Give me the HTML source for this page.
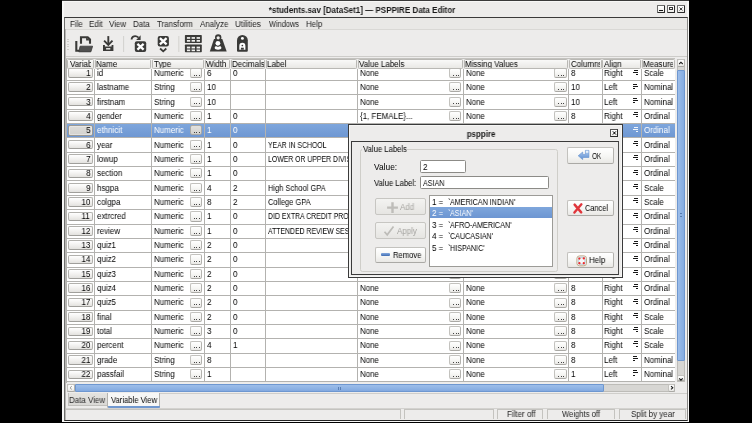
<!DOCTYPE html><html><head><meta charset="utf-8"><style>
html,body{margin:0;padding:0;}
body{width:752px;height:423px;background:#000;position:relative;overflow:hidden;font-family:"Liberation Sans", sans-serif;}
div{position:absolute;box-sizing:border-box;}
svg{position:absolute;overflow:visible;}
.t{white-space:pre;line-height:10px;will-change:transform;}
.rb{border:1px solid #b2b1ad;border-bottom-color:#a09f9b;border-radius:2px;background:linear-gradient(#ffffff,#f1f0ee 55%,#e3e2df);}
.hb{border:1px solid #b9b8b4;border-radius:1.5px;background:linear-gradient(#f9f9f8,#e9e8e5);}
.db{border:1px solid #c3c2be;border-right-color:#b3b2ae;border-bottom-color:#aaa9a5;border-radius:2px;background:linear-gradient(#ffffff,#f6f6f4 55%,#e9e8e5);}
.ds{border:1px solid #a9a8a4;border-radius:2px;background:linear-gradient(#e2e1de,#d2d1ce);}
.dt{border:1px solid #a8a7a3;border-radius:2px;background:linear-gradient(#ffffff,#f0efed 55%,#e0dfdc);}
</style></head><body>
<div style="left:62.20px;top:0.00px;width:627.00px;height:422.20px;background:#f7f7f6;border-top:1px solid #3a3a3a;"></div>
<div style="left:64.00px;top:2.00px;width:623.20px;height:418.20px;background:#edeceb;"></div>
<div class="t" style="left:162.00px;width:400px;text-align:center;top:4.60px;font-size:8.4px;font-weight:700;color:#1a1a1a;transform:scaleX(0.9595);transform-origin:50% 0;">*students.sav [DataSet1] — PSPPIRE Data Editor</div>
<div style="left:657.10px;top:5.00px;width:8.10px;height:8.00px;border:1px solid #6a6a6a;border-right-color:#2a2a2a;border-bottom-color:#2a2a2a;border-radius:1px;background:linear-gradient(#ffffff,#ecebe8);"></div>
<div style="left:667.00px;top:5.00px;width:8.10px;height:8.00px;border:1px solid #6a6a6a;border-right-color:#2a2a2a;border-bottom-color:#2a2a2a;border-radius:1px;background:linear-gradient(#ffffff,#ecebe8);"></div>
<div style="left:677.10px;top:5.00px;width:8.10px;height:8.00px;border:1px solid #6a6a6a;border-right-color:#2a2a2a;border-bottom-color:#2a2a2a;border-radius:1px;background:linear-gradient(#ffffff,#ecebe8);"></div>
<div style="left:659.30px;top:9.90px;width:3.90px;height:1.30px;background:#111;"></div>
<div style="left:669.00px;top:7.20px;width:4.40px;height:3.10px;border:1px solid #333;border-top-width:1.6px;"></div>
<svg style="left:677.1px;top:5px" width="8" height="8" viewBox="0 0 8 8"><path d="M2.2 2.2L5.9 5.8M5.9 2.2L2.2 5.8" stroke="#777" stroke-width="0.8"/><circle cx="4" cy="4" r="0.9" fill="#222"/></svg>
<div style="left:64.30px;top:16.80px;width:623.30px;height:404.00px;border:1px solid #3a3a3a;border-left-color:#6e6e6c;border-right-color:#8a8987;border-bottom-color:#262626;background:#edeceb;"></div>
<div style="left:65.30px;top:17.80px;width:0.90px;height:402.00px;background:#b8b7b4;"></div>
<div style="left:65.30px;top:17.80px;width:621.30px;height:10.80px;background:#e9e8e6;"></div>
<div class="t" style="left:69.90px;top:19.40px;font-size:8.4px;font-weight:400;color:#222;transform:scaleX(0.95);transform-origin:0 0;">File</div>
<div class="t" style="left:88.60px;top:19.40px;font-size:8.4px;font-weight:400;color:#222;transform:scaleX(0.95);transform-origin:0 0;">Edit</div>
<div class="t" style="left:109.30px;top:19.40px;font-size:8.4px;font-weight:400;color:#222;transform:scaleX(0.95);transform-origin:0 0;">View</div>
<div class="t" style="left:132.60px;top:19.40px;font-size:8.4px;font-weight:400;color:#222;transform:scaleX(0.95);transform-origin:0 0;">Data</div>
<div class="t" style="left:157.40px;top:19.40px;font-size:8.4px;font-weight:400;color:#222;transform:scaleX(0.95);transform-origin:0 0;">Transform</div>
<div class="t" style="left:200.00px;top:19.40px;font-size:8.4px;font-weight:400;color:#222;transform:scaleX(0.95);transform-origin:0 0;">Analyze</div>
<div class="t" style="left:235.00px;top:19.40px;font-size:8.4px;font-weight:400;color:#222;transform:scaleX(0.95);transform-origin:0 0;">Utilities</div>
<div class="t" style="left:268.60px;top:19.40px;font-size:8.4px;font-weight:400;color:#222;transform:scaleX(0.8835);transform-origin:0 0;">Windows</div>
<div class="t" style="left:306.00px;top:19.40px;font-size:8.4px;font-weight:400;color:#222;transform:scaleX(0.95);transform-origin:0 0;">Help</div>
<div style="left:66.20px;top:28.60px;width:620.40px;height:1.00px;background:#d9d8d5;"></div>
<div style="left:67.30px;top:39.00px;width:1.30px;height:0.90px;background:#cdccc8;"></div>
<div style="left:67.30px;top:41.40px;width:1.30px;height:0.90px;background:#cdccc8;"></div>
<div style="left:67.30px;top:43.80px;width:1.30px;height:0.90px;background:#cdccc8;"></div>
<div style="left:67.30px;top:46.20px;width:1.30px;height:0.90px;background:#cdccc8;"></div>
<div style="left:67.30px;top:48.60px;width:1.30px;height:0.90px;background:#cdccc8;"></div>
<svg style="left:0;top:0" width="752" height="60" viewBox="0 0 752 60">
<path d="M81 43.8 V37.2 H87.7 L90 39.5 V43.8" stroke="#3a3a38" stroke-width="2.1" fill="none" stroke-linejoin="miter"/>
<path d="M86.1 37.2 V40.6 H90.2 Z" fill="#3a3a38"/>
<path d="M76.3 41.1 V50.8 H90.6" stroke="#3a3a38" stroke-width="2.1" fill="none"/>
<path d="M80.1 46.2 H92.6 L90.9 51.8 H78.8 Z" fill="#505050" stroke="#3a3a38" stroke-width="0.8"/>
<path d="M108.3 36.1 V44.2" stroke="#3a3a38" stroke-width="1.9"/>
<path d="M104.1 40.6 L108.3 44.8 L112.5 40.6" stroke="#3a3a38" stroke-width="1.9" fill="none"/>
<path d="M103 45 H104.9 V46.6 H111.6 V45 H113.4 V51.1 H103 Z" fill="#3a3a38"/>
<rect x="106.1" y="48.1" width="4.2" height="1.4" fill="#f2f2f0"/>
<rect x="134.8" y="41.3" width="11.4" height="10.7" rx="2" fill="#3a3a38"/>
<path d="M137.4 43.9 L143.6 49.6 M143.6 43.9 L137.4 49.6" stroke="#fff" stroke-width="2.3"/>
<path d="M131.6 39.6 C131.6 36.2 135.5 35 138.6 37.6" stroke="#3a3a38" stroke-width="1.8" fill="none"/>
<path d="M140.6 35.2 V39.9 H136.2 Z" fill="#3a3a38"/>
<rect x="157.7" y="35.9" width="11.2" height="10.6" rx="2" fill="#3a3a38"/>
<path d="M159.9 38.2 L166.6 44.4 M166.6 38.2 L159.9 44.4" stroke="#fff" stroke-width="2.3"/>
<path d="M160.1 48.5 L163.2 51.3 L166.3 48.5" stroke="#3a3a38" stroke-width="1.8" fill="none"/>
<rect x="184.9" y="35.1" width="16.9" height="7.8" rx="0.7" fill="#3a3a38"/>
<rect x="184.9" y="44.6" width="16.9" height="7.7" rx="0.7" fill="#3a3a38"/>
<g fill="#f0f0ee">
<rect x="186.9" y="37.1" width="3.3" height="1.7"/><rect x="191.6" y="37.1" width="3.4" height="1.7"/><rect x="196.6" y="37.1" width="3.4" height="1.7"/>
<rect x="186.9" y="40.0" width="3.3" height="1.7"/><rect x="191.6" y="40.0" width="3.4" height="1.7"/><rect x="196.6" y="40.0" width="3.4" height="1.7"/>
<rect x="186.9" y="46.6" width="3.3" height="1.6"/><rect x="191.6" y="46.6" width="3.4" height="1.6"/><rect x="196.6" y="46.6" width="3.4" height="1.6"/>
<rect x="186.9" y="49.6" width="3.3" height="1.6"/><rect x="191.6" y="49.6" width="3.4" height="1.6"/><rect x="196.6" y="49.6" width="3.4" height="1.6"/>
</g>
<g fill="#9a9a98"><rect x="186.9" y="48.2" width="3.3" height="1.4"/><rect x="191.6" y="48.2" width="3.4" height="1.4"/><rect x="196.6" y="48.2" width="3.4" height="1.4"/></g>
<path d="M214.0 39.0 H222.3 L226.7 51.6 H209.8 Z" fill="#3a3a38"/>
<circle cx="218.2" cy="37.4" r="3.2" fill="#3a3a38"/>
<circle cx="218.2" cy="37.8" r="1.6" fill="#efeeec"/>
<circle cx="217.9" cy="43.3" r="2.4" fill="#fff"/>
<path d="M214.7 48.0 C214.7 46.0 216.3 45.7 218.0 46.9 C219.7 45.7 221.4 46.0 221.4 48.0 C221.4 50.2 214.7 50.2 214.7 48.0 Z" fill="#fff"/>
<path d="M237 40.3 a5.4 5.4 0 0 1 10.8 0 V50.8 a1 1 0 0 1-1 1 h-8.8 a1 1 0 0 1-1-1 Z" fill="#3a3a38"/>
<circle cx="242.4" cy="38.4" r="1.45" fill="#fff"/>
<path d="M239.3 49.7 V45.9 a3.05 3.05 0 0 1 6.1 0 V49.7 Z" fill="#fff"/>
<circle cx="242.35" cy="45.5" r="0.85" fill="#3a3a38"/>
<rect x="240.9" y="47.7" width="2.9" height="2.0" fill="#3a3a38"/>
<rect x="123.2" y="36.0" width="0.9" height="16" fill="#cfcecb"/>
<rect x="178.4" y="36.0" width="0.9" height="16" fill="#cfcecb"/>
</svg>
<div style="left:66.20px;top:56.20px;width:620.40px;height:0.90px;background:#cdccc9;"></div>
<div style="left:66.60px;top:58.30px;width:608.70px;height:324.06px;background:#fff;"></div>
<div style="left:66.60px;top:123.96px;width:608.70px;height:13.95px;background:linear-gradient(#7ea6dc,#6d96d2);"></div>
<div style="left:66.60px;top:80.00px;width:608.70px;height:1.00px;background:#b3b2af;"></div>
<div style="left:66.60px;top:94.36px;width:608.70px;height:1.00px;background:#b3b2af;"></div>
<div style="left:66.60px;top:108.71px;width:608.70px;height:1.00px;background:#b3b2af;"></div>
<div style="left:66.60px;top:123.06px;width:608.70px;height:1.00px;background:#b3b2af;"></div>
<div style="left:66.60px;top:137.42px;width:608.70px;height:1.00px;background:#b3b2af;"></div>
<div style="left:66.60px;top:151.77px;width:608.70px;height:1.00px;background:#b3b2af;"></div>
<div style="left:66.60px;top:166.13px;width:608.70px;height:1.00px;background:#b3b2af;"></div>
<div style="left:66.60px;top:180.48px;width:608.70px;height:1.00px;background:#b3b2af;"></div>
<div style="left:66.60px;top:194.84px;width:608.70px;height:1.00px;background:#b3b2af;"></div>
<div style="left:66.60px;top:209.19px;width:608.70px;height:1.00px;background:#b3b2af;"></div>
<div style="left:66.60px;top:223.55px;width:608.70px;height:1.00px;background:#b3b2af;"></div>
<div style="left:66.60px;top:237.90px;width:608.70px;height:1.00px;background:#b3b2af;"></div>
<div style="left:66.60px;top:252.26px;width:608.70px;height:1.00px;background:#b3b2af;"></div>
<div style="left:66.60px;top:266.62px;width:608.70px;height:1.00px;background:#b3b2af;"></div>
<div style="left:66.60px;top:280.97px;width:608.70px;height:1.00px;background:#b3b2af;"></div>
<div style="left:66.60px;top:295.32px;width:608.70px;height:1.00px;background:#b3b2af;"></div>
<div style="left:66.60px;top:309.68px;width:608.70px;height:1.00px;background:#b3b2af;"></div>
<div style="left:66.60px;top:324.03px;width:608.70px;height:1.00px;background:#b3b2af;"></div>
<div style="left:66.60px;top:338.39px;width:608.70px;height:1.00px;background:#b3b2af;"></div>
<div style="left:66.60px;top:352.75px;width:608.70px;height:1.00px;background:#b3b2af;"></div>
<div style="left:66.60px;top:367.10px;width:608.70px;height:1.00px;background:#b3b2af;"></div>
<div style="left:66.60px;top:381.45px;width:608.70px;height:1.00px;background:#b3b2af;"></div>
<div style="left:94.00px;top:58.30px;width:1.00px;height:323.95px;background:#b3b2af;"></div>
<div style="left:151.10px;top:58.30px;width:1.00px;height:323.95px;background:#b3b2af;"></div>
<div style="left:203.90px;top:58.30px;width:1.00px;height:323.95px;background:#b3b2af;"></div>
<div style="left:229.90px;top:58.30px;width:1.00px;height:323.95px;background:#b3b2af;"></div>
<div style="left:265.00px;top:58.30px;width:1.00px;height:323.95px;background:#b3b2af;"></div>
<div style="left:356.90px;top:58.30px;width:1.00px;height:323.95px;background:#b3b2af;"></div>
<div style="left:462.90px;top:58.30px;width:1.00px;height:323.95px;background:#b3b2af;"></div>
<div style="left:568.20px;top:58.30px;width:1.00px;height:323.95px;background:#b3b2af;"></div>
<div style="left:601.50px;top:58.30px;width:1.00px;height:323.95px;background:#b3b2af;"></div>
<div style="left:641.00px;top:58.30px;width:1.00px;height:323.95px;background:#b3b2af;"></div>
<div style="left:66.60px;top:58.30px;width:608.70px;height:10.40px;background:#edeceb;"></div>
<div class="hb" style="left:67.30px;top:58.80px;width:26.80px;height:10.20px;"></div>
<div style="left:68.30px;top:58.30px;width:23.20px;height:10px;overflow:hidden;"><div class="t" style="left:1.6px;top:1.2px;font-size:8.40px;color:#000000;transform:scaleX(0.95);transform-origin:0 0;">Variable</div></div>
<div class="hb" style="left:94.90px;top:58.80px;width:56.30px;height:10.20px;"></div>
<div style="left:95.90px;top:58.30px;width:53.90px;height:10px;overflow:hidden;"><div class="t" style="left:0.6px;top:1.2px;font-size:8.40px;color:#000000;transform:scaleX(0.95);transform-origin:0 0;">Name</div></div>
<div class="hb" style="left:152.00px;top:58.80px;width:52.00px;height:10.20px;"></div>
<div style="left:153.00px;top:58.30px;width:49.60px;height:10px;overflow:hidden;"><div class="t" style="left:0.6px;top:1.2px;font-size:8.40px;color:#000000;transform:scaleX(0.95);transform-origin:0 0;">Type</div></div>
<div class="hb" style="left:204.80px;top:58.80px;width:25.20px;height:10.20px;"></div>
<div style="left:205.80px;top:58.30px;width:22.80px;height:10px;overflow:hidden;"><div class="t" style="left:0.6px;top:1.2px;font-size:8.40px;color:#000000;transform:scaleX(0.95);transform-origin:0 0;">Width</div></div>
<div class="hb" style="left:230.80px;top:58.80px;width:34.30px;height:10.20px;"></div>
<div style="left:231.80px;top:58.30px;width:31.90px;height:10px;overflow:hidden;"><div class="t" style="left:0.6px;top:1.2px;font-size:8.40px;color:#000000;transform:scaleX(0.95);transform-origin:0 0;">Decimals</div></div>
<div class="hb" style="left:265.90px;top:58.80px;width:91.10px;height:10.20px;"></div>
<div style="left:266.90px;top:58.30px;width:88.70px;height:10px;overflow:hidden;"><div class="t" style="left:0.6px;top:1.2px;font-size:8.40px;color:#000000;transform:scaleX(0.95);transform-origin:0 0;">Label</div></div>
<div class="hb" style="left:357.80px;top:58.80px;width:105.20px;height:10.20px;"></div>
<div style="left:358.80px;top:58.30px;width:102.80px;height:10px;overflow:hidden;"><div class="t" style="left:0.6px;top:1.2px;font-size:8.40px;color:#000000;transform:scaleX(0.95);transform-origin:0 0;">Value Labels</div></div>
<div class="hb" style="left:463.80px;top:58.80px;width:104.50px;height:10.20px;"></div>
<div style="left:464.80px;top:58.30px;width:102.10px;height:10px;overflow:hidden;"><div class="t" style="left:0.6px;top:1.2px;font-size:8.40px;color:#000000;transform:scaleX(0.95);transform-origin:0 0;">Missing Values</div></div>
<div class="hb" style="left:569.10px;top:58.80px;width:32.50px;height:10.20px;"></div>
<div style="left:570.10px;top:58.30px;width:30.10px;height:10px;overflow:hidden;"><div class="t" style="left:0.6px;top:1.2px;font-size:8.40px;color:#000000;transform:scaleX(0.95);transform-origin:0 0;">Columns</div></div>
<div class="hb" style="left:602.40px;top:58.80px;width:38.70px;height:10.20px;"></div>
<div style="left:603.40px;top:58.30px;width:36.30px;height:10px;overflow:hidden;"><div class="t" style="left:0.6px;top:1.2px;font-size:8.40px;color:#000000;transform:scaleX(0.95);transform-origin:0 0;">Align</div></div>
<div class="hb" style="left:641.90px;top:58.80px;width:33.00px;height:10.20px;"></div>
<div style="left:642.90px;top:58.30px;width:30.60px;height:10px;overflow:hidden;"><div class="t" style="left:0.6px;top:1.2px;font-size:8.40px;color:#000000;transform:scaleX(0.95);transform-origin:0 0;">Measure</div></div>
<div style="left:66.6px;top:68.7px;width:608.70px;height:314.06px;overflow:hidden;">
<div class="rb" style="left:1.90px;top:-0.56px;width:24.50px;height:9.56px;"></div>
<div class="t" style="right:585.10px;top:-0.23px;font-size:8.40px;color:#000000;transform:scaleX(0.95);transform-origin:100% 0;">1</div>
<div class="t" style="left:30.00px;top:-0.23px;font-size:8.40px;color:#000000;transform:scaleX(0.95);transform-origin:0 0;">id</div>
<div class="t" style="left:87.40px;top:-0.23px;font-size:8.40px;color:#000000;transform:scaleX(0.95);transform-origin:0 0;">Numeric</div>
<div class="db" style="left:123.60px;top:-0.86px;width:12.00px;height:10.16px;"></div>
<div style="left:127.60px;top:6.00px;width:0.95px;height:0.95px;background:#333;border-radius:0.3px;"></div>
<div style="left:129.85px;top:6.00px;width:0.95px;height:0.95px;background:#333;border-radius:0.3px;"></div>
<div style="left:132.10px;top:6.00px;width:0.95px;height:0.95px;background:#333;border-radius:0.3px;"></div>
<div class="t" style="left:140.00px;top:-0.23px;font-size:8.40px;color:#000000;transform:scaleX(0.95);transform-origin:0 0;">6</div>
<div class="t" style="left:166.20px;top:-0.23px;font-size:8.40px;color:#000000;transform:scaleX(0.95);transform-origin:0 0;">0</div>
<div class="t" style="left:293.20px;top:-0.23px;font-size:8.40px;color:#000000;transform:scaleX(0.95);transform-origin:0 0;">None</div>
<div class="db" style="left:382.80px;top:-0.86px;width:11.80px;height:10.16px;"></div>
<div style="left:386.70px;top:6.00px;width:0.95px;height:0.95px;background:#333;border-radius:0.3px;"></div>
<div style="left:388.95px;top:6.00px;width:0.95px;height:0.95px;background:#333;border-radius:0.3px;"></div>
<div style="left:391.20px;top:6.00px;width:0.95px;height:0.95px;background:#333;border-radius:0.3px;"></div>
<div class="t" style="left:399.20px;top:-0.23px;font-size:8.40px;color:#000000;transform:scaleX(0.95);transform-origin:0 0;">None</div>
<div class="db" style="left:487.80px;top:-0.86px;width:12.20px;height:10.16px;"></div>
<div style="left:491.80px;top:6.00px;width:0.95px;height:0.95px;background:#333;border-radius:0.3px;"></div>
<div style="left:494.05px;top:6.00px;width:0.95px;height:0.95px;background:#333;border-radius:0.3px;"></div>
<div style="left:496.30px;top:6.00px;width:0.95px;height:0.95px;background:#333;border-radius:0.3px;"></div>
<div class="t" style="left:504.80px;top:-0.23px;font-size:8.40px;color:#000000;transform:scaleX(0.95);transform-origin:0 0;">8</div>
<div class="t" style="left:537.60px;top:-0.23px;font-size:8.40px;color:#000000;transform:scaleX(0.95);transform-origin:0 0;">Right</div>
<div style="left:567.60px;top:1.07px;width:3.80px;height:1.00px;background:#000000;opacity:0.9;"></div>
<div style="left:566.10px;top:3.07px;width:5.70px;height:1.00px;background:#000000;opacity:0.9;"></div>
<div style="left:569.30px;top:5.17px;width:2.50px;height:1.00px;background:#000000;opacity:0.9;"></div>
<div class="t" style="left:577.30px;top:-0.23px;font-size:8.40px;color:#000000;transform:scaleX(0.95);transform-origin:0 0;">Scale</div>
<div class="rb" style="left:1.90px;top:13.80px;width:24.50px;height:9.56px;"></div>
<div class="t" style="right:585.10px;top:13.60px;font-size:8.40px;color:#000000;transform:scaleX(0.95);transform-origin:100% 0;">2</div>
<div class="t" style="left:30.00px;top:13.60px;font-size:8.40px;color:#000000;transform:scaleX(0.95);transform-origin:0 0;">lastname</div>
<div class="t" style="left:87.40px;top:13.60px;font-size:8.40px;color:#000000;transform:scaleX(0.95);transform-origin:0 0;">String</div>
<div class="db" style="left:123.60px;top:13.50px;width:12.00px;height:10.16px;"></div>
<div style="left:127.60px;top:20.36px;width:0.95px;height:0.95px;background:#333;border-radius:0.3px;"></div>
<div style="left:129.85px;top:20.36px;width:0.95px;height:0.95px;background:#333;border-radius:0.3px;"></div>
<div style="left:132.10px;top:20.36px;width:0.95px;height:0.95px;background:#333;border-radius:0.3px;"></div>
<div class="t" style="left:140.00px;top:13.60px;font-size:8.40px;color:#000000;transform:scaleX(0.95);transform-origin:0 0;">10</div>
<div class="t" style="left:166.20px;top:13.60px;font-size:8.40px;color:#000000;transform:scaleX(0.95);transform-origin:0 0;"></div>
<div class="t" style="left:293.20px;top:13.60px;font-size:8.40px;color:#000000;transform:scaleX(0.95);transform-origin:0 0;">None</div>
<div class="db" style="left:382.80px;top:13.50px;width:11.80px;height:10.16px;"></div>
<div style="left:386.70px;top:20.36px;width:0.95px;height:0.95px;background:#333;border-radius:0.3px;"></div>
<div style="left:388.95px;top:20.36px;width:0.95px;height:0.95px;background:#333;border-radius:0.3px;"></div>
<div style="left:391.20px;top:20.36px;width:0.95px;height:0.95px;background:#333;border-radius:0.3px;"></div>
<div class="t" style="left:399.20px;top:13.60px;font-size:8.40px;color:#000000;transform:scaleX(0.95);transform-origin:0 0;">None</div>
<div class="db" style="left:487.80px;top:13.50px;width:12.20px;height:10.16px;"></div>
<div style="left:491.80px;top:20.36px;width:0.95px;height:0.95px;background:#333;border-radius:0.3px;"></div>
<div style="left:494.05px;top:20.36px;width:0.95px;height:0.95px;background:#333;border-radius:0.3px;"></div>
<div style="left:496.30px;top:20.36px;width:0.95px;height:0.95px;background:#333;border-radius:0.3px;"></div>
<div class="t" style="left:504.80px;top:13.60px;font-size:8.40px;color:#000000;transform:scaleX(0.95);transform-origin:0 0;">10</div>
<div class="t" style="left:537.60px;top:13.60px;font-size:8.40px;color:#000000;transform:scaleX(0.95);transform-origin:0 0;">Left</div>
<div style="left:566.50px;top:15.10px;width:3.90px;height:1.00px;background:#000000;opacity:0.9;"></div>
<div style="left:566.50px;top:17.20px;width:5.30px;height:1.00px;background:#000000;opacity:0.9;"></div>
<div style="left:566.50px;top:19.30px;width:2.10px;height:1.00px;background:#000000;opacity:0.9;"></div>
<div class="t" style="left:577.30px;top:13.60px;font-size:8.40px;color:#000000;transform:scaleX(0.95);transform-origin:0 0;">Nominal</div>
<div class="rb" style="left:1.90px;top:28.15px;width:24.50px;height:9.56px;"></div>
<div class="t" style="right:585.10px;top:27.93px;font-size:8.40px;color:#000000;transform:scaleX(0.95);transform-origin:100% 0;">3</div>
<div class="t" style="left:30.00px;top:27.93px;font-size:8.40px;color:#000000;transform:scaleX(0.95);transform-origin:0 0;">firstnam</div>
<div class="t" style="left:87.40px;top:27.93px;font-size:8.40px;color:#000000;transform:scaleX(0.95);transform-origin:0 0;">String</div>
<div class="db" style="left:123.60px;top:27.85px;width:12.00px;height:10.16px;"></div>
<div style="left:127.60px;top:34.71px;width:0.95px;height:0.95px;background:#333;border-radius:0.3px;"></div>
<div style="left:129.85px;top:34.71px;width:0.95px;height:0.95px;background:#333;border-radius:0.3px;"></div>
<div style="left:132.10px;top:34.71px;width:0.95px;height:0.95px;background:#333;border-radius:0.3px;"></div>
<div class="t" style="left:140.00px;top:27.93px;font-size:8.40px;color:#000000;transform:scaleX(0.95);transform-origin:0 0;">10</div>
<div class="t" style="left:166.20px;top:27.93px;font-size:8.40px;color:#000000;transform:scaleX(0.95);transform-origin:0 0;"></div>
<div class="t" style="left:293.20px;top:27.93px;font-size:8.40px;color:#000000;transform:scaleX(0.95);transform-origin:0 0;">None</div>
<div class="db" style="left:382.80px;top:27.85px;width:11.80px;height:10.16px;"></div>
<div style="left:386.70px;top:34.71px;width:0.95px;height:0.95px;background:#333;border-radius:0.3px;"></div>
<div style="left:388.95px;top:34.71px;width:0.95px;height:0.95px;background:#333;border-radius:0.3px;"></div>
<div style="left:391.20px;top:34.71px;width:0.95px;height:0.95px;background:#333;border-radius:0.3px;"></div>
<div class="t" style="left:399.20px;top:27.93px;font-size:8.40px;color:#000000;transform:scaleX(0.95);transform-origin:0 0;">None</div>
<div class="db" style="left:487.80px;top:27.85px;width:12.20px;height:10.16px;"></div>
<div style="left:491.80px;top:34.71px;width:0.95px;height:0.95px;background:#333;border-radius:0.3px;"></div>
<div style="left:494.05px;top:34.71px;width:0.95px;height:0.95px;background:#333;border-radius:0.3px;"></div>
<div style="left:496.30px;top:34.71px;width:0.95px;height:0.95px;background:#333;border-radius:0.3px;"></div>
<div class="t" style="left:504.80px;top:27.93px;font-size:8.40px;color:#000000;transform:scaleX(0.95);transform-origin:0 0;">10</div>
<div class="t" style="left:537.60px;top:27.93px;font-size:8.40px;color:#000000;transform:scaleX(0.95);transform-origin:0 0;">Left</div>
<div style="left:566.50px;top:29.43px;width:3.90px;height:1.00px;background:#000000;opacity:0.9;"></div>
<div style="left:566.50px;top:31.53px;width:5.30px;height:1.00px;background:#000000;opacity:0.9;"></div>
<div style="left:566.50px;top:33.63px;width:2.10px;height:1.00px;background:#000000;opacity:0.9;"></div>
<div class="t" style="left:577.30px;top:27.93px;font-size:8.40px;color:#000000;transform:scaleX(0.95);transform-origin:0 0;">Nominal</div>
<div class="rb" style="left:1.90px;top:42.51px;width:24.50px;height:9.56px;"></div>
<div class="t" style="right:585.10px;top:42.26px;font-size:8.40px;color:#000000;transform:scaleX(0.95);transform-origin:100% 0;">4</div>
<div class="t" style="left:30.00px;top:42.26px;font-size:8.40px;color:#000000;transform:scaleX(0.95);transform-origin:0 0;">gender</div>
<div class="t" style="left:87.40px;top:42.26px;font-size:8.40px;color:#000000;transform:scaleX(0.95);transform-origin:0 0;">Numeric</div>
<div class="db" style="left:123.60px;top:42.21px;width:12.00px;height:10.16px;"></div>
<div style="left:127.60px;top:49.06px;width:0.95px;height:0.95px;background:#333;border-radius:0.3px;"></div>
<div style="left:129.85px;top:49.06px;width:0.95px;height:0.95px;background:#333;border-radius:0.3px;"></div>
<div style="left:132.10px;top:49.06px;width:0.95px;height:0.95px;background:#333;border-radius:0.3px;"></div>
<div class="t" style="left:140.00px;top:42.26px;font-size:8.40px;color:#000000;transform:scaleX(0.95);transform-origin:0 0;">1</div>
<div class="t" style="left:166.20px;top:42.26px;font-size:8.40px;color:#000000;transform:scaleX(0.95);transform-origin:0 0;">0</div>
<div class="t" style="left:293.20px;top:42.26px;font-size:8.40px;color:#000000;transform:scaleX(0.95);transform-origin:0 0;">{1, FEMALE}...</div>
<div class="db" style="left:382.80px;top:42.21px;width:11.80px;height:10.16px;"></div>
<div style="left:386.70px;top:49.06px;width:0.95px;height:0.95px;background:#333;border-radius:0.3px;"></div>
<div style="left:388.95px;top:49.06px;width:0.95px;height:0.95px;background:#333;border-radius:0.3px;"></div>
<div style="left:391.20px;top:49.06px;width:0.95px;height:0.95px;background:#333;border-radius:0.3px;"></div>
<div class="t" style="left:399.20px;top:42.26px;font-size:8.40px;color:#000000;transform:scaleX(0.95);transform-origin:0 0;">None</div>
<div class="db" style="left:487.80px;top:42.21px;width:12.20px;height:10.16px;"></div>
<div style="left:491.80px;top:49.06px;width:0.95px;height:0.95px;background:#333;border-radius:0.3px;"></div>
<div style="left:494.05px;top:49.06px;width:0.95px;height:0.95px;background:#333;border-radius:0.3px;"></div>
<div style="left:496.30px;top:49.06px;width:0.95px;height:0.95px;background:#333;border-radius:0.3px;"></div>
<div class="t" style="left:504.80px;top:42.26px;font-size:8.40px;color:#000000;transform:scaleX(0.95);transform-origin:0 0;">8</div>
<div class="t" style="left:537.60px;top:42.26px;font-size:8.40px;color:#000000;transform:scaleX(0.95);transform-origin:0 0;">Right</div>
<div style="left:567.60px;top:43.56px;width:3.80px;height:1.00px;background:#000000;opacity:0.9;"></div>
<div style="left:566.10px;top:45.56px;width:5.70px;height:1.00px;background:#000000;opacity:0.9;"></div>
<div style="left:569.30px;top:47.66px;width:2.50px;height:1.00px;background:#000000;opacity:0.9;"></div>
<div class="t" style="left:577.30px;top:42.26px;font-size:8.40px;color:#000000;transform:scaleX(0.95);transform-origin:0 0;">Ordinal</div>
<div style="left:1.40px;top:56.26px;width:25.00px;height:10.95px;border:1px solid #9a9995;border-radius:2px;background:linear-gradient(#dedddA,#d3d2cf);box-shadow:inset 0 0 0 0.6px #f3f2ef;"></div>
<div class="t" style="right:585.10px;top:56.58px;font-size:8.40px;color:#000000;transform:scaleX(0.95);transform-origin:100% 0;">5</div>
<div class="t" style="left:30.00px;top:56.58px;font-size:8.40px;color:#ffffff;transform:scaleX(0.95);transform-origin:0 0;">ethnicit</div>
<div class="t" style="left:87.40px;top:56.58px;font-size:8.40px;color:#ffffff;transform:scaleX(0.95);transform-origin:0 0;">Numeric</div>
<div class="ds" style="left:123.60px;top:56.56px;width:12.00px;height:10.15px;"></div>
<div style="left:127.60px;top:63.42px;width:0.95px;height:0.95px;background:#333;border-radius:0.3px;"></div>
<div style="left:129.85px;top:63.42px;width:0.95px;height:0.95px;background:#333;border-radius:0.3px;"></div>
<div style="left:132.10px;top:63.42px;width:0.95px;height:0.95px;background:#333;border-radius:0.3px;"></div>
<div class="t" style="left:140.00px;top:56.58px;font-size:8.40px;color:#ffffff;transform:scaleX(0.95);transform-origin:0 0;">1</div>
<div class="t" style="left:166.20px;top:56.58px;font-size:8.40px;color:#ffffff;transform:scaleX(0.95);transform-origin:0 0;">0</div>
<div class="t" style="left:293.20px;top:56.58px;font-size:8.40px;color:#ffffff;transform:scaleX(0.95);transform-origin:0 0;">None</div>
<div class="db" style="left:382.80px;top:56.56px;width:11.80px;height:10.15px;"></div>
<div style="left:386.70px;top:63.42px;width:0.95px;height:0.95px;background:#333;border-radius:0.3px;"></div>
<div style="left:388.95px;top:63.42px;width:0.95px;height:0.95px;background:#333;border-radius:0.3px;"></div>
<div style="left:391.20px;top:63.42px;width:0.95px;height:0.95px;background:#333;border-radius:0.3px;"></div>
<div class="t" style="left:399.20px;top:56.58px;font-size:8.40px;color:#ffffff;transform:scaleX(0.95);transform-origin:0 0;">None</div>
<div class="db" style="left:487.80px;top:56.56px;width:12.20px;height:10.15px;"></div>
<div style="left:491.80px;top:63.42px;width:0.95px;height:0.95px;background:#333;border-radius:0.3px;"></div>
<div style="left:494.05px;top:63.42px;width:0.95px;height:0.95px;background:#333;border-radius:0.3px;"></div>
<div style="left:496.30px;top:63.42px;width:0.95px;height:0.95px;background:#333;border-radius:0.3px;"></div>
<div class="t" style="left:504.80px;top:56.58px;font-size:8.40px;color:#ffffff;transform:scaleX(0.95);transform-origin:0 0;">8</div>
<div class="t" style="left:537.60px;top:56.58px;font-size:8.40px;color:#ffffff;transform:scaleX(0.95);transform-origin:0 0;">Right</div>
<div style="left:567.60px;top:57.88px;width:3.80px;height:1.00px;background:#ffffff;opacity:0.9;"></div>
<div style="left:566.10px;top:59.88px;width:5.70px;height:1.00px;background:#ffffff;opacity:0.9;"></div>
<div style="left:569.30px;top:61.98px;width:2.50px;height:1.00px;background:#ffffff;opacity:0.9;"></div>
<div class="t" style="left:577.30px;top:56.58px;font-size:8.40px;color:#ffffff;transform:scaleX(0.95);transform-origin:0 0;">Ordinal</div>
<div class="rb" style="left:1.90px;top:71.22px;width:24.50px;height:9.56px;"></div>
<div class="t" style="right:585.10px;top:70.91px;font-size:8.40px;color:#000000;transform:scaleX(0.95);transform-origin:100% 0;">6</div>
<div class="t" style="left:30.00px;top:70.91px;font-size:8.40px;color:#000000;transform:scaleX(0.95);transform-origin:0 0;">year</div>
<div class="t" style="left:87.40px;top:70.91px;font-size:8.40px;color:#000000;transform:scaleX(0.95);transform-origin:0 0;">Numeric</div>
<div class="db" style="left:123.60px;top:70.92px;width:12.00px;height:10.15px;"></div>
<div style="left:127.60px;top:77.77px;width:0.95px;height:0.95px;background:#333;border-radius:0.3px;"></div>
<div style="left:129.85px;top:77.77px;width:0.95px;height:0.95px;background:#333;border-radius:0.3px;"></div>
<div style="left:132.10px;top:77.77px;width:0.95px;height:0.95px;background:#333;border-radius:0.3px;"></div>
<div class="t" style="left:140.00px;top:70.91px;font-size:8.40px;color:#000000;transform:scaleX(0.95);transform-origin:0 0;">1</div>
<div class="t" style="left:166.20px;top:70.91px;font-size:8.40px;color:#000000;transform:scaleX(0.95);transform-origin:0 0;">0</div>
<div style="left:201.00px;top:70.91px;width:89.40px;height:10px;overflow:hidden;"><div class="t" style="left:0;top:0;font-size:8.40px;color:#000000;transform:scaleX(0.8217);transform-origin:0 0;">YEAR IN SCHOOL</div></div>
<div class="t" style="left:293.20px;top:70.91px;font-size:8.40px;color:#000000;transform:scaleX(0.95);transform-origin:0 0;">None</div>
<div class="db" style="left:382.80px;top:70.92px;width:11.80px;height:10.15px;"></div>
<div style="left:386.70px;top:77.77px;width:0.95px;height:0.95px;background:#333;border-radius:0.3px;"></div>
<div style="left:388.95px;top:77.77px;width:0.95px;height:0.95px;background:#333;border-radius:0.3px;"></div>
<div style="left:391.20px;top:77.77px;width:0.95px;height:0.95px;background:#333;border-radius:0.3px;"></div>
<div class="t" style="left:399.20px;top:70.91px;font-size:8.40px;color:#000000;transform:scaleX(0.95);transform-origin:0 0;">None</div>
<div class="db" style="left:487.80px;top:70.92px;width:12.20px;height:10.15px;"></div>
<div style="left:491.80px;top:77.77px;width:0.95px;height:0.95px;background:#333;border-radius:0.3px;"></div>
<div style="left:494.05px;top:77.77px;width:0.95px;height:0.95px;background:#333;border-radius:0.3px;"></div>
<div style="left:496.30px;top:77.77px;width:0.95px;height:0.95px;background:#333;border-radius:0.3px;"></div>
<div class="t" style="left:504.80px;top:70.91px;font-size:8.40px;color:#000000;transform:scaleX(0.95);transform-origin:0 0;">8</div>
<div class="t" style="left:537.60px;top:70.91px;font-size:8.40px;color:#000000;transform:scaleX(0.95);transform-origin:0 0;">Right</div>
<div style="left:567.60px;top:72.21px;width:3.80px;height:1.00px;background:#000000;opacity:0.9;"></div>
<div style="left:566.10px;top:74.21px;width:5.70px;height:1.00px;background:#000000;opacity:0.9;"></div>
<div style="left:569.30px;top:76.31px;width:2.50px;height:1.00px;background:#000000;opacity:0.9;"></div>
<div class="t" style="left:577.30px;top:70.91px;font-size:8.40px;color:#000000;transform:scaleX(0.95);transform-origin:0 0;">Ordinal</div>
<div class="rb" style="left:1.90px;top:85.58px;width:24.50px;height:9.56px;"></div>
<div class="t" style="right:585.10px;top:85.24px;font-size:8.40px;color:#000000;transform:scaleX(0.95);transform-origin:100% 0;">7</div>
<div class="t" style="left:30.00px;top:85.24px;font-size:8.40px;color:#000000;transform:scaleX(0.95);transform-origin:0 0;">lowup</div>
<div class="t" style="left:87.40px;top:85.24px;font-size:8.40px;color:#000000;transform:scaleX(0.95);transform-origin:0 0;">Numeric</div>
<div class="db" style="left:123.60px;top:85.28px;width:12.00px;height:10.15px;"></div>
<div style="left:127.60px;top:92.13px;width:0.95px;height:0.95px;background:#333;border-radius:0.3px;"></div>
<div style="left:129.85px;top:92.13px;width:0.95px;height:0.95px;background:#333;border-radius:0.3px;"></div>
<div style="left:132.10px;top:92.13px;width:0.95px;height:0.95px;background:#333;border-radius:0.3px;"></div>
<div class="t" style="left:140.00px;top:85.24px;font-size:8.40px;color:#000000;transform:scaleX(0.95);transform-origin:0 0;">1</div>
<div class="t" style="left:166.20px;top:85.24px;font-size:8.40px;color:#000000;transform:scaleX(0.95);transform-origin:0 0;">0</div>
<div style="left:201.00px;top:85.24px;width:89.40px;height:10px;overflow:hidden;"><div class="t" style="left:0;top:0;font-size:8.40px;color:#000000;transform:scaleX(0.8217);transform-origin:0 0;">LOWER OR UPPER DIVISION</div></div>
<div class="t" style="left:293.20px;top:85.24px;font-size:8.40px;color:#000000;transform:scaleX(0.95);transform-origin:0 0;">None</div>
<div class="db" style="left:382.80px;top:85.28px;width:11.80px;height:10.15px;"></div>
<div style="left:386.70px;top:92.13px;width:0.95px;height:0.95px;background:#333;border-radius:0.3px;"></div>
<div style="left:388.95px;top:92.13px;width:0.95px;height:0.95px;background:#333;border-radius:0.3px;"></div>
<div style="left:391.20px;top:92.13px;width:0.95px;height:0.95px;background:#333;border-radius:0.3px;"></div>
<div class="t" style="left:399.20px;top:85.24px;font-size:8.40px;color:#000000;transform:scaleX(0.95);transform-origin:0 0;">None</div>
<div class="db" style="left:487.80px;top:85.28px;width:12.20px;height:10.15px;"></div>
<div style="left:491.80px;top:92.13px;width:0.95px;height:0.95px;background:#333;border-radius:0.3px;"></div>
<div style="left:494.05px;top:92.13px;width:0.95px;height:0.95px;background:#333;border-radius:0.3px;"></div>
<div style="left:496.30px;top:92.13px;width:0.95px;height:0.95px;background:#333;border-radius:0.3px;"></div>
<div class="t" style="left:504.80px;top:85.24px;font-size:8.40px;color:#000000;transform:scaleX(0.95);transform-origin:0 0;">8</div>
<div class="t" style="left:537.60px;top:85.24px;font-size:8.40px;color:#000000;transform:scaleX(0.95);transform-origin:0 0;">Right</div>
<div style="left:567.60px;top:86.54px;width:3.80px;height:1.00px;background:#000000;opacity:0.9;"></div>
<div style="left:566.10px;top:88.54px;width:5.70px;height:1.00px;background:#000000;opacity:0.9;"></div>
<div style="left:569.30px;top:90.64px;width:2.50px;height:1.00px;background:#000000;opacity:0.9;"></div>
<div class="t" style="left:577.30px;top:85.24px;font-size:8.40px;color:#000000;transform:scaleX(0.95);transform-origin:0 0;">Ordinal</div>
<div class="rb" style="left:1.90px;top:99.93px;width:24.50px;height:9.56px;"></div>
<div class="t" style="right:585.10px;top:99.57px;font-size:8.40px;color:#000000;transform:scaleX(0.95);transform-origin:100% 0;">8</div>
<div class="t" style="left:30.00px;top:99.57px;font-size:8.40px;color:#000000;transform:scaleX(0.95);transform-origin:0 0;">section</div>
<div class="t" style="left:87.40px;top:99.57px;font-size:8.40px;color:#000000;transform:scaleX(0.95);transform-origin:0 0;">Numeric</div>
<div class="db" style="left:123.60px;top:99.63px;width:12.00px;height:10.15px;"></div>
<div style="left:127.60px;top:106.48px;width:0.95px;height:0.95px;background:#333;border-radius:0.3px;"></div>
<div style="left:129.85px;top:106.48px;width:0.95px;height:0.95px;background:#333;border-radius:0.3px;"></div>
<div style="left:132.10px;top:106.48px;width:0.95px;height:0.95px;background:#333;border-radius:0.3px;"></div>
<div class="t" style="left:140.00px;top:99.57px;font-size:8.40px;color:#000000;transform:scaleX(0.95);transform-origin:0 0;">1</div>
<div class="t" style="left:166.20px;top:99.57px;font-size:8.40px;color:#000000;transform:scaleX(0.95);transform-origin:0 0;">0</div>
<div class="t" style="left:293.20px;top:99.57px;font-size:8.40px;color:#000000;transform:scaleX(0.95);transform-origin:0 0;">None</div>
<div class="db" style="left:382.80px;top:99.63px;width:11.80px;height:10.15px;"></div>
<div style="left:386.70px;top:106.48px;width:0.95px;height:0.95px;background:#333;border-radius:0.3px;"></div>
<div style="left:388.95px;top:106.48px;width:0.95px;height:0.95px;background:#333;border-radius:0.3px;"></div>
<div style="left:391.20px;top:106.48px;width:0.95px;height:0.95px;background:#333;border-radius:0.3px;"></div>
<div class="t" style="left:399.20px;top:99.57px;font-size:8.40px;color:#000000;transform:scaleX(0.95);transform-origin:0 0;">None</div>
<div class="db" style="left:487.80px;top:99.63px;width:12.20px;height:10.15px;"></div>
<div style="left:491.80px;top:106.48px;width:0.95px;height:0.95px;background:#333;border-radius:0.3px;"></div>
<div style="left:494.05px;top:106.48px;width:0.95px;height:0.95px;background:#333;border-radius:0.3px;"></div>
<div style="left:496.30px;top:106.48px;width:0.95px;height:0.95px;background:#333;border-radius:0.3px;"></div>
<div class="t" style="left:504.80px;top:99.57px;font-size:8.40px;color:#000000;transform:scaleX(0.95);transform-origin:0 0;">8</div>
<div class="t" style="left:537.60px;top:99.57px;font-size:8.40px;color:#000000;transform:scaleX(0.95);transform-origin:0 0;">Right</div>
<div style="left:567.60px;top:100.87px;width:3.80px;height:1.00px;background:#000000;opacity:0.9;"></div>
<div style="left:566.10px;top:102.87px;width:5.70px;height:1.00px;background:#000000;opacity:0.9;"></div>
<div style="left:569.30px;top:104.97px;width:2.50px;height:1.00px;background:#000000;opacity:0.9;"></div>
<div class="t" style="left:577.30px;top:99.57px;font-size:8.40px;color:#000000;transform:scaleX(0.95);transform-origin:0 0;">Ordinal</div>
<div class="rb" style="left:1.90px;top:114.28px;width:24.50px;height:9.56px;"></div>
<div class="t" style="right:585.10px;top:113.90px;font-size:8.40px;color:#000000;transform:scaleX(0.95);transform-origin:100% 0;">9</div>
<div class="t" style="left:30.00px;top:113.90px;font-size:8.40px;color:#000000;transform:scaleX(0.95);transform-origin:0 0;">hsgpa</div>
<div class="t" style="left:87.40px;top:113.90px;font-size:8.40px;color:#000000;transform:scaleX(0.95);transform-origin:0 0;">Numeric</div>
<div class="db" style="left:123.60px;top:113.98px;width:12.00px;height:10.15px;"></div>
<div style="left:127.60px;top:120.84px;width:0.95px;height:0.95px;background:#333;border-radius:0.3px;"></div>
<div style="left:129.85px;top:120.84px;width:0.95px;height:0.95px;background:#333;border-radius:0.3px;"></div>
<div style="left:132.10px;top:120.84px;width:0.95px;height:0.95px;background:#333;border-radius:0.3px;"></div>
<div class="t" style="left:140.00px;top:113.90px;font-size:8.40px;color:#000000;transform:scaleX(0.95);transform-origin:0 0;">4</div>
<div class="t" style="left:166.20px;top:113.90px;font-size:8.40px;color:#000000;transform:scaleX(0.95);transform-origin:0 0;">2</div>
<div style="left:201.00px;top:113.90px;width:89.40px;height:10px;overflow:hidden;"><div class="t" style="left:0;top:0;font-size:8.40px;color:#000000;transform:scaleX(0.893);transform-origin:0 0;">High School GPA</div></div>
<div class="t" style="left:293.20px;top:113.90px;font-size:8.40px;color:#000000;transform:scaleX(0.95);transform-origin:0 0;">None</div>
<div class="db" style="left:382.80px;top:113.98px;width:11.80px;height:10.15px;"></div>
<div style="left:386.70px;top:120.84px;width:0.95px;height:0.95px;background:#333;border-radius:0.3px;"></div>
<div style="left:388.95px;top:120.84px;width:0.95px;height:0.95px;background:#333;border-radius:0.3px;"></div>
<div style="left:391.20px;top:120.84px;width:0.95px;height:0.95px;background:#333;border-radius:0.3px;"></div>
<div class="t" style="left:399.20px;top:113.90px;font-size:8.40px;color:#000000;transform:scaleX(0.95);transform-origin:0 0;">None</div>
<div class="db" style="left:487.80px;top:113.98px;width:12.20px;height:10.15px;"></div>
<div style="left:491.80px;top:120.84px;width:0.95px;height:0.95px;background:#333;border-radius:0.3px;"></div>
<div style="left:494.05px;top:120.84px;width:0.95px;height:0.95px;background:#333;border-radius:0.3px;"></div>
<div style="left:496.30px;top:120.84px;width:0.95px;height:0.95px;background:#333;border-radius:0.3px;"></div>
<div class="t" style="left:504.80px;top:113.90px;font-size:8.40px;color:#000000;transform:scaleX(0.95);transform-origin:0 0;">8</div>
<div class="t" style="left:537.60px;top:113.90px;font-size:8.40px;color:#000000;transform:scaleX(0.95);transform-origin:0 0;">Right</div>
<div style="left:567.60px;top:115.20px;width:3.80px;height:1.00px;background:#000000;opacity:0.9;"></div>
<div style="left:566.10px;top:117.20px;width:5.70px;height:1.00px;background:#000000;opacity:0.9;"></div>
<div style="left:569.30px;top:119.30px;width:2.50px;height:1.00px;background:#000000;opacity:0.9;"></div>
<div class="t" style="left:577.30px;top:113.90px;font-size:8.40px;color:#000000;transform:scaleX(0.95);transform-origin:0 0;">Scale</div>
<div class="rb" style="left:1.90px;top:128.64px;width:24.50px;height:9.56px;"></div>
<div class="t" style="right:585.10px;top:128.22px;font-size:8.40px;color:#000000;transform:scaleX(0.95);transform-origin:100% 0;">10</div>
<div class="t" style="left:30.00px;top:128.22px;font-size:8.40px;color:#000000;transform:scaleX(0.95);transform-origin:0 0;">colgpa</div>
<div class="t" style="left:87.40px;top:128.22px;font-size:8.40px;color:#000000;transform:scaleX(0.95);transform-origin:0 0;">Numeric</div>
<div class="db" style="left:123.60px;top:128.34px;width:12.00px;height:10.15px;"></div>
<div style="left:127.60px;top:135.19px;width:0.95px;height:0.95px;background:#333;border-radius:0.3px;"></div>
<div style="left:129.85px;top:135.19px;width:0.95px;height:0.95px;background:#333;border-radius:0.3px;"></div>
<div style="left:132.10px;top:135.19px;width:0.95px;height:0.95px;background:#333;border-radius:0.3px;"></div>
<div class="t" style="left:140.00px;top:128.22px;font-size:8.40px;color:#000000;transform:scaleX(0.95);transform-origin:0 0;">8</div>
<div class="t" style="left:166.20px;top:128.22px;font-size:8.40px;color:#000000;transform:scaleX(0.95);transform-origin:0 0;">2</div>
<div style="left:201.00px;top:128.22px;width:89.40px;height:10px;overflow:hidden;"><div class="t" style="left:0;top:0;font-size:8.40px;color:#000000;transform:scaleX(0.893);transform-origin:0 0;">College GPA</div></div>
<div class="t" style="left:293.20px;top:128.22px;font-size:8.40px;color:#000000;transform:scaleX(0.95);transform-origin:0 0;">None</div>
<div class="db" style="left:382.80px;top:128.34px;width:11.80px;height:10.15px;"></div>
<div style="left:386.70px;top:135.19px;width:0.95px;height:0.95px;background:#333;border-radius:0.3px;"></div>
<div style="left:388.95px;top:135.19px;width:0.95px;height:0.95px;background:#333;border-radius:0.3px;"></div>
<div style="left:391.20px;top:135.19px;width:0.95px;height:0.95px;background:#333;border-radius:0.3px;"></div>
<div class="t" style="left:399.20px;top:128.22px;font-size:8.40px;color:#000000;transform:scaleX(0.95);transform-origin:0 0;">None</div>
<div class="db" style="left:487.80px;top:128.34px;width:12.20px;height:10.15px;"></div>
<div style="left:491.80px;top:135.19px;width:0.95px;height:0.95px;background:#333;border-radius:0.3px;"></div>
<div style="left:494.05px;top:135.19px;width:0.95px;height:0.95px;background:#333;border-radius:0.3px;"></div>
<div style="left:496.30px;top:135.19px;width:0.95px;height:0.95px;background:#333;border-radius:0.3px;"></div>
<div class="t" style="left:504.80px;top:128.22px;font-size:8.40px;color:#000000;transform:scaleX(0.95);transform-origin:0 0;">8</div>
<div class="t" style="left:537.60px;top:128.22px;font-size:8.40px;color:#000000;transform:scaleX(0.95);transform-origin:0 0;">Right</div>
<div style="left:567.60px;top:129.52px;width:3.80px;height:1.00px;background:#000000;opacity:0.9;"></div>
<div style="left:566.10px;top:131.52px;width:5.70px;height:1.00px;background:#000000;opacity:0.9;"></div>
<div style="left:569.30px;top:133.62px;width:2.50px;height:1.00px;background:#000000;opacity:0.9;"></div>
<div class="t" style="left:577.30px;top:128.22px;font-size:8.40px;color:#000000;transform:scaleX(0.95);transform-origin:0 0;">Scale</div>
<div class="rb" style="left:1.90px;top:143.00px;width:24.50px;height:9.56px;"></div>
<div class="t" style="right:585.10px;top:142.55px;font-size:8.40px;color:#000000;transform:scaleX(0.95);transform-origin:100% 0;">11</div>
<div class="t" style="left:30.00px;top:142.55px;font-size:8.40px;color:#000000;transform:scaleX(0.95);transform-origin:0 0;">extrcred</div>
<div class="t" style="left:87.40px;top:142.55px;font-size:8.40px;color:#000000;transform:scaleX(0.95);transform-origin:0 0;">Numeric</div>
<div class="db" style="left:123.60px;top:142.70px;width:12.00px;height:10.15px;"></div>
<div style="left:127.60px;top:149.55px;width:0.95px;height:0.95px;background:#333;border-radius:0.3px;"></div>
<div style="left:129.85px;top:149.55px;width:0.95px;height:0.95px;background:#333;border-radius:0.3px;"></div>
<div style="left:132.10px;top:149.55px;width:0.95px;height:0.95px;background:#333;border-radius:0.3px;"></div>
<div class="t" style="left:140.00px;top:142.55px;font-size:8.40px;color:#000000;transform:scaleX(0.95);transform-origin:0 0;">1</div>
<div class="t" style="left:166.20px;top:142.55px;font-size:8.40px;color:#000000;transform:scaleX(0.95);transform-origin:0 0;">0</div>
<div style="left:201.00px;top:142.55px;width:89.40px;height:10px;overflow:hidden;"><div class="t" style="left:0;top:0;font-size:8.40px;color:#000000;transform:scaleX(0.8217);transform-origin:0 0;">DID EXTRA CREDIT PROJECT</div></div>
<div class="t" style="left:293.20px;top:142.55px;font-size:8.40px;color:#000000;transform:scaleX(0.95);transform-origin:0 0;">None</div>
<div class="db" style="left:382.80px;top:142.70px;width:11.80px;height:10.15px;"></div>
<div style="left:386.70px;top:149.55px;width:0.95px;height:0.95px;background:#333;border-radius:0.3px;"></div>
<div style="left:388.95px;top:149.55px;width:0.95px;height:0.95px;background:#333;border-radius:0.3px;"></div>
<div style="left:391.20px;top:149.55px;width:0.95px;height:0.95px;background:#333;border-radius:0.3px;"></div>
<div class="t" style="left:399.20px;top:142.55px;font-size:8.40px;color:#000000;transform:scaleX(0.95);transform-origin:0 0;">None</div>
<div class="db" style="left:487.80px;top:142.70px;width:12.20px;height:10.15px;"></div>
<div style="left:491.80px;top:149.55px;width:0.95px;height:0.95px;background:#333;border-radius:0.3px;"></div>
<div style="left:494.05px;top:149.55px;width:0.95px;height:0.95px;background:#333;border-radius:0.3px;"></div>
<div style="left:496.30px;top:149.55px;width:0.95px;height:0.95px;background:#333;border-radius:0.3px;"></div>
<div class="t" style="left:504.80px;top:142.55px;font-size:8.40px;color:#000000;transform:scaleX(0.95);transform-origin:0 0;">8</div>
<div class="t" style="left:537.60px;top:142.55px;font-size:8.40px;color:#000000;transform:scaleX(0.95);transform-origin:0 0;">Right</div>
<div style="left:567.60px;top:143.85px;width:3.80px;height:1.00px;background:#000000;opacity:0.9;"></div>
<div style="left:566.10px;top:145.85px;width:5.70px;height:1.00px;background:#000000;opacity:0.9;"></div>
<div style="left:569.30px;top:147.95px;width:2.50px;height:1.00px;background:#000000;opacity:0.9;"></div>
<div class="t" style="left:577.30px;top:142.55px;font-size:8.40px;color:#000000;transform:scaleX(0.95);transform-origin:0 0;">Ordinal</div>
<div class="rb" style="left:1.90px;top:157.35px;width:24.50px;height:9.56px;"></div>
<div class="t" style="right:585.10px;top:156.88px;font-size:8.40px;color:#000000;transform:scaleX(0.95);transform-origin:100% 0;">12</div>
<div class="t" style="left:30.00px;top:156.88px;font-size:8.40px;color:#000000;transform:scaleX(0.95);transform-origin:0 0;">review</div>
<div class="t" style="left:87.40px;top:156.88px;font-size:8.40px;color:#000000;transform:scaleX(0.95);transform-origin:0 0;">Numeric</div>
<div class="db" style="left:123.60px;top:157.05px;width:12.00px;height:10.15px;"></div>
<div style="left:127.60px;top:163.90px;width:0.95px;height:0.95px;background:#333;border-radius:0.3px;"></div>
<div style="left:129.85px;top:163.90px;width:0.95px;height:0.95px;background:#333;border-radius:0.3px;"></div>
<div style="left:132.10px;top:163.90px;width:0.95px;height:0.95px;background:#333;border-radius:0.3px;"></div>
<div class="t" style="left:140.00px;top:156.88px;font-size:8.40px;color:#000000;transform:scaleX(0.95);transform-origin:0 0;">1</div>
<div class="t" style="left:166.20px;top:156.88px;font-size:8.40px;color:#000000;transform:scaleX(0.95);transform-origin:0 0;">0</div>
<div style="left:201.00px;top:156.88px;width:89.40px;height:10px;overflow:hidden;"><div class="t" style="left:0;top:0;font-size:8.40px;color:#000000;transform:scaleX(0.8217);transform-origin:0 0;">ATTENDED REVIEW SESSION</div></div>
<div class="t" style="left:293.20px;top:156.88px;font-size:8.40px;color:#000000;transform:scaleX(0.95);transform-origin:0 0;">None</div>
<div class="db" style="left:382.80px;top:157.05px;width:11.80px;height:10.15px;"></div>
<div style="left:386.70px;top:163.90px;width:0.95px;height:0.95px;background:#333;border-radius:0.3px;"></div>
<div style="left:388.95px;top:163.90px;width:0.95px;height:0.95px;background:#333;border-radius:0.3px;"></div>
<div style="left:391.20px;top:163.90px;width:0.95px;height:0.95px;background:#333;border-radius:0.3px;"></div>
<div class="t" style="left:399.20px;top:156.88px;font-size:8.40px;color:#000000;transform:scaleX(0.95);transform-origin:0 0;">None</div>
<div class="db" style="left:487.80px;top:157.05px;width:12.20px;height:10.15px;"></div>
<div style="left:491.80px;top:163.90px;width:0.95px;height:0.95px;background:#333;border-radius:0.3px;"></div>
<div style="left:494.05px;top:163.90px;width:0.95px;height:0.95px;background:#333;border-radius:0.3px;"></div>
<div style="left:496.30px;top:163.90px;width:0.95px;height:0.95px;background:#333;border-radius:0.3px;"></div>
<div class="t" style="left:504.80px;top:156.88px;font-size:8.40px;color:#000000;transform:scaleX(0.95);transform-origin:0 0;">8</div>
<div class="t" style="left:537.60px;top:156.88px;font-size:8.40px;color:#000000;transform:scaleX(0.95);transform-origin:0 0;">Right</div>
<div style="left:567.60px;top:158.18px;width:3.80px;height:1.00px;background:#000000;opacity:0.9;"></div>
<div style="left:566.10px;top:160.18px;width:5.70px;height:1.00px;background:#000000;opacity:0.9;"></div>
<div style="left:569.30px;top:162.28px;width:2.50px;height:1.00px;background:#000000;opacity:0.9;"></div>
<div class="t" style="left:577.30px;top:156.88px;font-size:8.40px;color:#000000;transform:scaleX(0.95);transform-origin:0 0;">Ordinal</div>
<div class="rb" style="left:1.90px;top:171.70px;width:24.50px;height:9.56px;"></div>
<div class="t" style="right:585.10px;top:171.21px;font-size:8.40px;color:#000000;transform:scaleX(0.95);transform-origin:100% 0;">13</div>
<div class="t" style="left:30.00px;top:171.21px;font-size:8.40px;color:#000000;transform:scaleX(0.95);transform-origin:0 0;">quiz1</div>
<div class="t" style="left:87.40px;top:171.21px;font-size:8.40px;color:#000000;transform:scaleX(0.95);transform-origin:0 0;">Numeric</div>
<div class="db" style="left:123.60px;top:171.41px;width:12.00px;height:10.15px;"></div>
<div style="left:127.60px;top:178.26px;width:0.95px;height:0.95px;background:#333;border-radius:0.3px;"></div>
<div style="left:129.85px;top:178.26px;width:0.95px;height:0.95px;background:#333;border-radius:0.3px;"></div>
<div style="left:132.10px;top:178.26px;width:0.95px;height:0.95px;background:#333;border-radius:0.3px;"></div>
<div class="t" style="left:140.00px;top:171.21px;font-size:8.40px;color:#000000;transform:scaleX(0.95);transform-origin:0 0;">2</div>
<div class="t" style="left:166.20px;top:171.21px;font-size:8.40px;color:#000000;transform:scaleX(0.95);transform-origin:0 0;">0</div>
<div class="t" style="left:293.20px;top:171.21px;font-size:8.40px;color:#000000;transform:scaleX(0.95);transform-origin:0 0;">None</div>
<div class="db" style="left:382.80px;top:171.41px;width:11.80px;height:10.15px;"></div>
<div style="left:386.70px;top:178.26px;width:0.95px;height:0.95px;background:#333;border-radius:0.3px;"></div>
<div style="left:388.95px;top:178.26px;width:0.95px;height:0.95px;background:#333;border-radius:0.3px;"></div>
<div style="left:391.20px;top:178.26px;width:0.95px;height:0.95px;background:#333;border-radius:0.3px;"></div>
<div class="t" style="left:399.20px;top:171.21px;font-size:8.40px;color:#000000;transform:scaleX(0.95);transform-origin:0 0;">None</div>
<div class="db" style="left:487.80px;top:171.41px;width:12.20px;height:10.15px;"></div>
<div style="left:491.80px;top:178.26px;width:0.95px;height:0.95px;background:#333;border-radius:0.3px;"></div>
<div style="left:494.05px;top:178.26px;width:0.95px;height:0.95px;background:#333;border-radius:0.3px;"></div>
<div style="left:496.30px;top:178.26px;width:0.95px;height:0.95px;background:#333;border-radius:0.3px;"></div>
<div class="t" style="left:504.80px;top:171.21px;font-size:8.40px;color:#000000;transform:scaleX(0.95);transform-origin:0 0;">8</div>
<div class="t" style="left:537.60px;top:171.21px;font-size:8.40px;color:#000000;transform:scaleX(0.95);transform-origin:0 0;">Right</div>
<div style="left:567.60px;top:172.51px;width:3.80px;height:1.00px;background:#000000;opacity:0.9;"></div>
<div style="left:566.10px;top:174.51px;width:5.70px;height:1.00px;background:#000000;opacity:0.9;"></div>
<div style="left:569.30px;top:176.61px;width:2.50px;height:1.00px;background:#000000;opacity:0.9;"></div>
<div class="t" style="left:577.30px;top:171.21px;font-size:8.40px;color:#000000;transform:scaleX(0.95);transform-origin:0 0;">Ordinal</div>
<div class="rb" style="left:1.90px;top:186.06px;width:24.50px;height:9.56px;"></div>
<div class="t" style="right:585.10px;top:185.54px;font-size:8.40px;color:#000000;transform:scaleX(0.95);transform-origin:100% 0;">14</div>
<div class="t" style="left:30.00px;top:185.54px;font-size:8.40px;color:#000000;transform:scaleX(0.95);transform-origin:0 0;">quiz2</div>
<div class="t" style="left:87.40px;top:185.54px;font-size:8.40px;color:#000000;transform:scaleX(0.95);transform-origin:0 0;">Numeric</div>
<div class="db" style="left:123.60px;top:185.76px;width:12.00px;height:10.15px;"></div>
<div style="left:127.60px;top:192.62px;width:0.95px;height:0.95px;background:#333;border-radius:0.3px;"></div>
<div style="left:129.85px;top:192.62px;width:0.95px;height:0.95px;background:#333;border-radius:0.3px;"></div>
<div style="left:132.10px;top:192.62px;width:0.95px;height:0.95px;background:#333;border-radius:0.3px;"></div>
<div class="t" style="left:140.00px;top:185.54px;font-size:8.40px;color:#000000;transform:scaleX(0.95);transform-origin:0 0;">2</div>
<div class="t" style="left:166.20px;top:185.54px;font-size:8.40px;color:#000000;transform:scaleX(0.95);transform-origin:0 0;">0</div>
<div class="t" style="left:293.20px;top:185.54px;font-size:8.40px;color:#000000;transform:scaleX(0.95);transform-origin:0 0;">None</div>
<div class="db" style="left:382.80px;top:185.76px;width:11.80px;height:10.15px;"></div>
<div style="left:386.70px;top:192.62px;width:0.95px;height:0.95px;background:#333;border-radius:0.3px;"></div>
<div style="left:388.95px;top:192.62px;width:0.95px;height:0.95px;background:#333;border-radius:0.3px;"></div>
<div style="left:391.20px;top:192.62px;width:0.95px;height:0.95px;background:#333;border-radius:0.3px;"></div>
<div class="t" style="left:399.20px;top:185.54px;font-size:8.40px;color:#000000;transform:scaleX(0.95);transform-origin:0 0;">None</div>
<div class="db" style="left:487.80px;top:185.76px;width:12.20px;height:10.15px;"></div>
<div style="left:491.80px;top:192.62px;width:0.95px;height:0.95px;background:#333;border-radius:0.3px;"></div>
<div style="left:494.05px;top:192.62px;width:0.95px;height:0.95px;background:#333;border-radius:0.3px;"></div>
<div style="left:496.30px;top:192.62px;width:0.95px;height:0.95px;background:#333;border-radius:0.3px;"></div>
<div class="t" style="left:504.80px;top:185.54px;font-size:8.40px;color:#000000;transform:scaleX(0.95);transform-origin:0 0;">8</div>
<div class="t" style="left:537.60px;top:185.54px;font-size:8.40px;color:#000000;transform:scaleX(0.95);transform-origin:0 0;">Right</div>
<div style="left:567.60px;top:186.84px;width:3.80px;height:1.00px;background:#000000;opacity:0.9;"></div>
<div style="left:566.10px;top:188.84px;width:5.70px;height:1.00px;background:#000000;opacity:0.9;"></div>
<div style="left:569.30px;top:190.94px;width:2.50px;height:1.00px;background:#000000;opacity:0.9;"></div>
<div class="t" style="left:577.30px;top:185.54px;font-size:8.40px;color:#000000;transform:scaleX(0.95);transform-origin:0 0;">Ordinal</div>
<div class="rb" style="left:1.90px;top:200.41px;width:24.50px;height:9.56px;"></div>
<div class="t" style="right:585.10px;top:199.86px;font-size:8.40px;color:#000000;transform:scaleX(0.95);transform-origin:100% 0;">15</div>
<div class="t" style="left:30.00px;top:199.86px;font-size:8.40px;color:#000000;transform:scaleX(0.95);transform-origin:0 0;">quiz3</div>
<div class="t" style="left:87.40px;top:199.86px;font-size:8.40px;color:#000000;transform:scaleX(0.95);transform-origin:0 0;">Numeric</div>
<div class="db" style="left:123.60px;top:200.11px;width:12.00px;height:10.16px;"></div>
<div style="left:127.60px;top:206.97px;width:0.95px;height:0.95px;background:#333;border-radius:0.3px;"></div>
<div style="left:129.85px;top:206.97px;width:0.95px;height:0.95px;background:#333;border-radius:0.3px;"></div>
<div style="left:132.10px;top:206.97px;width:0.95px;height:0.95px;background:#333;border-radius:0.3px;"></div>
<div class="t" style="left:140.00px;top:199.86px;font-size:8.40px;color:#000000;transform:scaleX(0.95);transform-origin:0 0;">2</div>
<div class="t" style="left:166.20px;top:199.86px;font-size:8.40px;color:#000000;transform:scaleX(0.95);transform-origin:0 0;">0</div>
<div class="t" style="left:293.20px;top:199.86px;font-size:8.40px;color:#000000;transform:scaleX(0.95);transform-origin:0 0;">None</div>
<div class="db" style="left:382.80px;top:200.11px;width:11.80px;height:10.16px;"></div>
<div style="left:386.70px;top:206.97px;width:0.95px;height:0.95px;background:#333;border-radius:0.3px;"></div>
<div style="left:388.95px;top:206.97px;width:0.95px;height:0.95px;background:#333;border-radius:0.3px;"></div>
<div style="left:391.20px;top:206.97px;width:0.95px;height:0.95px;background:#333;border-radius:0.3px;"></div>
<div class="t" style="left:399.20px;top:199.86px;font-size:8.40px;color:#000000;transform:scaleX(0.95);transform-origin:0 0;">None</div>
<div class="db" style="left:487.80px;top:200.11px;width:12.20px;height:10.16px;"></div>
<div style="left:491.80px;top:206.97px;width:0.95px;height:0.95px;background:#333;border-radius:0.3px;"></div>
<div style="left:494.05px;top:206.97px;width:0.95px;height:0.95px;background:#333;border-radius:0.3px;"></div>
<div style="left:496.30px;top:206.97px;width:0.95px;height:0.95px;background:#333;border-radius:0.3px;"></div>
<div class="t" style="left:504.80px;top:199.86px;font-size:8.40px;color:#000000;transform:scaleX(0.95);transform-origin:0 0;">8</div>
<div class="t" style="left:537.60px;top:199.86px;font-size:8.40px;color:#000000;transform:scaleX(0.95);transform-origin:0 0;">Right</div>
<div style="left:567.60px;top:201.16px;width:3.80px;height:1.00px;background:#000000;opacity:0.9;"></div>
<div style="left:566.10px;top:203.16px;width:5.70px;height:1.00px;background:#000000;opacity:0.9;"></div>
<div style="left:569.30px;top:205.26px;width:2.50px;height:1.00px;background:#000000;opacity:0.9;"></div>
<div class="t" style="left:577.30px;top:199.86px;font-size:8.40px;color:#000000;transform:scaleX(0.95);transform-origin:0 0;">Ordinal</div>
<div class="rb" style="left:1.90px;top:214.77px;width:24.50px;height:9.56px;"></div>
<div class="t" style="right:585.10px;top:214.19px;font-size:8.40px;color:#000000;transform:scaleX(0.95);transform-origin:100% 0;">16</div>
<div class="t" style="left:30.00px;top:214.19px;font-size:8.40px;color:#000000;transform:scaleX(0.95);transform-origin:0 0;">quiz4</div>
<div class="t" style="left:87.40px;top:214.19px;font-size:8.40px;color:#000000;transform:scaleX(0.95);transform-origin:0 0;">Numeric</div>
<div class="db" style="left:123.60px;top:214.47px;width:12.00px;height:10.16px;"></div>
<div style="left:127.60px;top:221.32px;width:0.95px;height:0.95px;background:#333;border-radius:0.3px;"></div>
<div style="left:129.85px;top:221.32px;width:0.95px;height:0.95px;background:#333;border-radius:0.3px;"></div>
<div style="left:132.10px;top:221.32px;width:0.95px;height:0.95px;background:#333;border-radius:0.3px;"></div>
<div class="t" style="left:140.00px;top:214.19px;font-size:8.40px;color:#000000;transform:scaleX(0.95);transform-origin:0 0;">2</div>
<div class="t" style="left:166.20px;top:214.19px;font-size:8.40px;color:#000000;transform:scaleX(0.95);transform-origin:0 0;">0</div>
<div class="t" style="left:293.20px;top:214.19px;font-size:8.40px;color:#000000;transform:scaleX(0.95);transform-origin:0 0;">None</div>
<div class="db" style="left:382.80px;top:214.47px;width:11.80px;height:10.16px;"></div>
<div style="left:386.70px;top:221.32px;width:0.95px;height:0.95px;background:#333;border-radius:0.3px;"></div>
<div style="left:388.95px;top:221.32px;width:0.95px;height:0.95px;background:#333;border-radius:0.3px;"></div>
<div style="left:391.20px;top:221.32px;width:0.95px;height:0.95px;background:#333;border-radius:0.3px;"></div>
<div class="t" style="left:399.20px;top:214.19px;font-size:8.40px;color:#000000;transform:scaleX(0.95);transform-origin:0 0;">None</div>
<div class="db" style="left:487.80px;top:214.47px;width:12.20px;height:10.16px;"></div>
<div style="left:491.80px;top:221.32px;width:0.95px;height:0.95px;background:#333;border-radius:0.3px;"></div>
<div style="left:494.05px;top:221.32px;width:0.95px;height:0.95px;background:#333;border-radius:0.3px;"></div>
<div style="left:496.30px;top:221.32px;width:0.95px;height:0.95px;background:#333;border-radius:0.3px;"></div>
<div class="t" style="left:504.80px;top:214.19px;font-size:8.40px;color:#000000;transform:scaleX(0.95);transform-origin:0 0;">8</div>
<div class="t" style="left:537.60px;top:214.19px;font-size:8.40px;color:#000000;transform:scaleX(0.95);transform-origin:0 0;">Right</div>
<div style="left:567.60px;top:215.49px;width:3.80px;height:1.00px;background:#000000;opacity:0.9;"></div>
<div style="left:566.10px;top:217.49px;width:5.70px;height:1.00px;background:#000000;opacity:0.9;"></div>
<div style="left:569.30px;top:219.59px;width:2.50px;height:1.00px;background:#000000;opacity:0.9;"></div>
<div class="t" style="left:577.30px;top:214.19px;font-size:8.40px;color:#000000;transform:scaleX(0.95);transform-origin:0 0;">Ordinal</div>
<div class="rb" style="left:1.90px;top:229.12px;width:24.50px;height:9.56px;"></div>
<div class="t" style="right:585.10px;top:228.52px;font-size:8.40px;color:#000000;transform:scaleX(0.95);transform-origin:100% 0;">17</div>
<div class="t" style="left:30.00px;top:228.52px;font-size:8.40px;color:#000000;transform:scaleX(0.95);transform-origin:0 0;">quiz5</div>
<div class="t" style="left:87.40px;top:228.52px;font-size:8.40px;color:#000000;transform:scaleX(0.95);transform-origin:0 0;">Numeric</div>
<div class="db" style="left:123.60px;top:228.82px;width:12.00px;height:10.16px;"></div>
<div style="left:127.60px;top:235.68px;width:0.95px;height:0.95px;background:#333;border-radius:0.3px;"></div>
<div style="left:129.85px;top:235.68px;width:0.95px;height:0.95px;background:#333;border-radius:0.3px;"></div>
<div style="left:132.10px;top:235.68px;width:0.95px;height:0.95px;background:#333;border-radius:0.3px;"></div>
<div class="t" style="left:140.00px;top:228.52px;font-size:8.40px;color:#000000;transform:scaleX(0.95);transform-origin:0 0;">2</div>
<div class="t" style="left:166.20px;top:228.52px;font-size:8.40px;color:#000000;transform:scaleX(0.95);transform-origin:0 0;">0</div>
<div class="t" style="left:293.20px;top:228.52px;font-size:8.40px;color:#000000;transform:scaleX(0.95);transform-origin:0 0;">None</div>
<div class="db" style="left:382.80px;top:228.82px;width:11.80px;height:10.16px;"></div>
<div style="left:386.70px;top:235.68px;width:0.95px;height:0.95px;background:#333;border-radius:0.3px;"></div>
<div style="left:388.95px;top:235.68px;width:0.95px;height:0.95px;background:#333;border-radius:0.3px;"></div>
<div style="left:391.20px;top:235.68px;width:0.95px;height:0.95px;background:#333;border-radius:0.3px;"></div>
<div class="t" style="left:399.20px;top:228.52px;font-size:8.40px;color:#000000;transform:scaleX(0.95);transform-origin:0 0;">None</div>
<div class="db" style="left:487.80px;top:228.82px;width:12.20px;height:10.16px;"></div>
<div style="left:491.80px;top:235.68px;width:0.95px;height:0.95px;background:#333;border-radius:0.3px;"></div>
<div style="left:494.05px;top:235.68px;width:0.95px;height:0.95px;background:#333;border-radius:0.3px;"></div>
<div style="left:496.30px;top:235.68px;width:0.95px;height:0.95px;background:#333;border-radius:0.3px;"></div>
<div class="t" style="left:504.80px;top:228.52px;font-size:8.40px;color:#000000;transform:scaleX(0.95);transform-origin:0 0;">8</div>
<div class="t" style="left:537.60px;top:228.52px;font-size:8.40px;color:#000000;transform:scaleX(0.95);transform-origin:0 0;">Right</div>
<div style="left:567.60px;top:229.82px;width:3.80px;height:1.00px;background:#000000;opacity:0.9;"></div>
<div style="left:566.10px;top:231.82px;width:5.70px;height:1.00px;background:#000000;opacity:0.9;"></div>
<div style="left:569.30px;top:233.92px;width:2.50px;height:1.00px;background:#000000;opacity:0.9;"></div>
<div class="t" style="left:577.30px;top:228.52px;font-size:8.40px;color:#000000;transform:scaleX(0.95);transform-origin:0 0;">Ordinal</div>
<div class="rb" style="left:1.90px;top:243.48px;width:24.50px;height:9.56px;"></div>
<div class="t" style="right:585.10px;top:242.85px;font-size:8.40px;color:#000000;transform:scaleX(0.95);transform-origin:100% 0;">18</div>
<div class="t" style="left:30.00px;top:242.85px;font-size:8.40px;color:#000000;transform:scaleX(0.95);transform-origin:0 0;">final</div>
<div class="t" style="left:87.40px;top:242.85px;font-size:8.40px;color:#000000;transform:scaleX(0.95);transform-origin:0 0;">Numeric</div>
<div class="db" style="left:123.60px;top:243.18px;width:12.00px;height:10.16px;"></div>
<div style="left:127.60px;top:250.03px;width:0.95px;height:0.95px;background:#333;border-radius:0.3px;"></div>
<div style="left:129.85px;top:250.03px;width:0.95px;height:0.95px;background:#333;border-radius:0.3px;"></div>
<div style="left:132.10px;top:250.03px;width:0.95px;height:0.95px;background:#333;border-radius:0.3px;"></div>
<div class="t" style="left:140.00px;top:242.85px;font-size:8.40px;color:#000000;transform:scaleX(0.95);transform-origin:0 0;">2</div>
<div class="t" style="left:166.20px;top:242.85px;font-size:8.40px;color:#000000;transform:scaleX(0.95);transform-origin:0 0;">0</div>
<div class="t" style="left:293.20px;top:242.85px;font-size:8.40px;color:#000000;transform:scaleX(0.95);transform-origin:0 0;">None</div>
<div class="db" style="left:382.80px;top:243.18px;width:11.80px;height:10.16px;"></div>
<div style="left:386.70px;top:250.03px;width:0.95px;height:0.95px;background:#333;border-radius:0.3px;"></div>
<div style="left:388.95px;top:250.03px;width:0.95px;height:0.95px;background:#333;border-radius:0.3px;"></div>
<div style="left:391.20px;top:250.03px;width:0.95px;height:0.95px;background:#333;border-radius:0.3px;"></div>
<div class="t" style="left:399.20px;top:242.85px;font-size:8.40px;color:#000000;transform:scaleX(0.95);transform-origin:0 0;">None</div>
<div class="db" style="left:487.80px;top:243.18px;width:12.20px;height:10.16px;"></div>
<div style="left:491.80px;top:250.03px;width:0.95px;height:0.95px;background:#333;border-radius:0.3px;"></div>
<div style="left:494.05px;top:250.03px;width:0.95px;height:0.95px;background:#333;border-radius:0.3px;"></div>
<div style="left:496.30px;top:250.03px;width:0.95px;height:0.95px;background:#333;border-radius:0.3px;"></div>
<div class="t" style="left:504.80px;top:242.85px;font-size:8.40px;color:#000000;transform:scaleX(0.95);transform-origin:0 0;">8</div>
<div class="t" style="left:537.60px;top:242.85px;font-size:8.40px;color:#000000;transform:scaleX(0.95);transform-origin:0 0;">Right</div>
<div style="left:567.60px;top:244.15px;width:3.80px;height:1.00px;background:#000000;opacity:0.9;"></div>
<div style="left:566.10px;top:246.15px;width:5.70px;height:1.00px;background:#000000;opacity:0.9;"></div>
<div style="left:569.30px;top:248.25px;width:2.50px;height:1.00px;background:#000000;opacity:0.9;"></div>
<div class="t" style="left:577.30px;top:242.85px;font-size:8.40px;color:#000000;transform:scaleX(0.95);transform-origin:0 0;">Scale</div>
<div class="rb" style="left:1.90px;top:257.83px;width:24.50px;height:9.56px;"></div>
<div class="t" style="right:585.10px;top:257.18px;font-size:8.40px;color:#000000;transform:scaleX(0.95);transform-origin:100% 0;">19</div>
<div class="t" style="left:30.00px;top:257.18px;font-size:8.40px;color:#000000;transform:scaleX(0.95);transform-origin:0 0;">total</div>
<div class="t" style="left:87.40px;top:257.18px;font-size:8.40px;color:#000000;transform:scaleX(0.95);transform-origin:0 0;">Numeric</div>
<div class="db" style="left:123.60px;top:257.53px;width:12.00px;height:10.16px;"></div>
<div style="left:127.60px;top:264.39px;width:0.95px;height:0.95px;background:#333;border-radius:0.3px;"></div>
<div style="left:129.85px;top:264.39px;width:0.95px;height:0.95px;background:#333;border-radius:0.3px;"></div>
<div style="left:132.10px;top:264.39px;width:0.95px;height:0.95px;background:#333;border-radius:0.3px;"></div>
<div class="t" style="left:140.00px;top:257.18px;font-size:8.40px;color:#000000;transform:scaleX(0.95);transform-origin:0 0;">3</div>
<div class="t" style="left:166.20px;top:257.18px;font-size:8.40px;color:#000000;transform:scaleX(0.95);transform-origin:0 0;">0</div>
<div class="t" style="left:293.20px;top:257.18px;font-size:8.40px;color:#000000;transform:scaleX(0.95);transform-origin:0 0;">None</div>
<div class="db" style="left:382.80px;top:257.53px;width:11.80px;height:10.16px;"></div>
<div style="left:386.70px;top:264.39px;width:0.95px;height:0.95px;background:#333;border-radius:0.3px;"></div>
<div style="left:388.95px;top:264.39px;width:0.95px;height:0.95px;background:#333;border-radius:0.3px;"></div>
<div style="left:391.20px;top:264.39px;width:0.95px;height:0.95px;background:#333;border-radius:0.3px;"></div>
<div class="t" style="left:399.20px;top:257.18px;font-size:8.40px;color:#000000;transform:scaleX(0.95);transform-origin:0 0;">None</div>
<div class="db" style="left:487.80px;top:257.53px;width:12.20px;height:10.16px;"></div>
<div style="left:491.80px;top:264.39px;width:0.95px;height:0.95px;background:#333;border-radius:0.3px;"></div>
<div style="left:494.05px;top:264.39px;width:0.95px;height:0.95px;background:#333;border-radius:0.3px;"></div>
<div style="left:496.30px;top:264.39px;width:0.95px;height:0.95px;background:#333;border-radius:0.3px;"></div>
<div class="t" style="left:504.80px;top:257.18px;font-size:8.40px;color:#000000;transform:scaleX(0.95);transform-origin:0 0;">8</div>
<div class="t" style="left:537.60px;top:257.18px;font-size:8.40px;color:#000000;transform:scaleX(0.95);transform-origin:0 0;">Right</div>
<div style="left:567.60px;top:258.48px;width:3.80px;height:1.00px;background:#000000;opacity:0.9;"></div>
<div style="left:566.10px;top:260.48px;width:5.70px;height:1.00px;background:#000000;opacity:0.9;"></div>
<div style="left:569.30px;top:262.58px;width:2.50px;height:1.00px;background:#000000;opacity:0.9;"></div>
<div class="t" style="left:577.30px;top:257.18px;font-size:8.40px;color:#000000;transform:scaleX(0.95);transform-origin:0 0;">Scale</div>
<div class="rb" style="left:1.90px;top:272.19px;width:24.50px;height:9.56px;"></div>
<div class="t" style="right:585.10px;top:271.50px;font-size:8.40px;color:#000000;transform:scaleX(0.95);transform-origin:100% 0;">20</div>
<div class="t" style="left:30.00px;top:271.50px;font-size:8.40px;color:#000000;transform:scaleX(0.95);transform-origin:0 0;">percent</div>
<div class="t" style="left:87.40px;top:271.50px;font-size:8.40px;color:#000000;transform:scaleX(0.95);transform-origin:0 0;">Numeric</div>
<div class="db" style="left:123.60px;top:271.89px;width:12.00px;height:10.16px;"></div>
<div style="left:127.60px;top:278.75px;width:0.95px;height:0.95px;background:#333;border-radius:0.3px;"></div>
<div style="left:129.85px;top:278.75px;width:0.95px;height:0.95px;background:#333;border-radius:0.3px;"></div>
<div style="left:132.10px;top:278.75px;width:0.95px;height:0.95px;background:#333;border-radius:0.3px;"></div>
<div class="t" style="left:140.00px;top:271.50px;font-size:8.40px;color:#000000;transform:scaleX(0.95);transform-origin:0 0;">4</div>
<div class="t" style="left:166.20px;top:271.50px;font-size:8.40px;color:#000000;transform:scaleX(0.95);transform-origin:0 0;">1</div>
<div class="t" style="left:293.20px;top:271.50px;font-size:8.40px;color:#000000;transform:scaleX(0.95);transform-origin:0 0;">None</div>
<div class="db" style="left:382.80px;top:271.89px;width:11.80px;height:10.16px;"></div>
<div style="left:386.70px;top:278.75px;width:0.95px;height:0.95px;background:#333;border-radius:0.3px;"></div>
<div style="left:388.95px;top:278.75px;width:0.95px;height:0.95px;background:#333;border-radius:0.3px;"></div>
<div style="left:391.20px;top:278.75px;width:0.95px;height:0.95px;background:#333;border-radius:0.3px;"></div>
<div class="t" style="left:399.20px;top:271.50px;font-size:8.40px;color:#000000;transform:scaleX(0.95);transform-origin:0 0;">None</div>
<div class="db" style="left:487.80px;top:271.89px;width:12.20px;height:10.16px;"></div>
<div style="left:491.80px;top:278.75px;width:0.95px;height:0.95px;background:#333;border-radius:0.3px;"></div>
<div style="left:494.05px;top:278.75px;width:0.95px;height:0.95px;background:#333;border-radius:0.3px;"></div>
<div style="left:496.30px;top:278.75px;width:0.95px;height:0.95px;background:#333;border-radius:0.3px;"></div>
<div class="t" style="left:504.80px;top:271.50px;font-size:8.40px;color:#000000;transform:scaleX(0.95);transform-origin:0 0;">8</div>
<div class="t" style="left:537.60px;top:271.50px;font-size:8.40px;color:#000000;transform:scaleX(0.95);transform-origin:0 0;">Right</div>
<div style="left:567.60px;top:272.80px;width:3.80px;height:1.00px;background:#000000;opacity:0.9;"></div>
<div style="left:566.10px;top:274.80px;width:5.70px;height:1.00px;background:#000000;opacity:0.9;"></div>
<div style="left:569.30px;top:276.90px;width:2.50px;height:1.00px;background:#000000;opacity:0.9;"></div>
<div class="t" style="left:577.30px;top:271.50px;font-size:8.40px;color:#000000;transform:scaleX(0.95);transform-origin:0 0;">Scale</div>
<div class="rb" style="left:1.90px;top:286.55px;width:24.50px;height:9.56px;"></div>
<div class="t" style="right:585.10px;top:285.83px;font-size:8.40px;color:#000000;transform:scaleX(0.95);transform-origin:100% 0;">21</div>
<div class="t" style="left:30.00px;top:285.83px;font-size:8.40px;color:#000000;transform:scaleX(0.95);transform-origin:0 0;">grade</div>
<div class="t" style="left:87.40px;top:285.83px;font-size:8.40px;color:#000000;transform:scaleX(0.95);transform-origin:0 0;">String</div>
<div class="db" style="left:123.60px;top:286.25px;width:12.00px;height:10.16px;"></div>
<div style="left:127.60px;top:293.10px;width:0.95px;height:0.95px;background:#333;border-radius:0.3px;"></div>
<div style="left:129.85px;top:293.10px;width:0.95px;height:0.95px;background:#333;border-radius:0.3px;"></div>
<div style="left:132.10px;top:293.10px;width:0.95px;height:0.95px;background:#333;border-radius:0.3px;"></div>
<div class="t" style="left:140.00px;top:285.83px;font-size:8.40px;color:#000000;transform:scaleX(0.95);transform-origin:0 0;">8</div>
<div class="t" style="left:166.20px;top:285.83px;font-size:8.40px;color:#000000;transform:scaleX(0.95);transform-origin:0 0;"></div>
<div class="t" style="left:293.20px;top:285.83px;font-size:8.40px;color:#000000;transform:scaleX(0.95);transform-origin:0 0;">None</div>
<div class="db" style="left:382.80px;top:286.25px;width:11.80px;height:10.16px;"></div>
<div style="left:386.70px;top:293.10px;width:0.95px;height:0.95px;background:#333;border-radius:0.3px;"></div>
<div style="left:388.95px;top:293.10px;width:0.95px;height:0.95px;background:#333;border-radius:0.3px;"></div>
<div style="left:391.20px;top:293.10px;width:0.95px;height:0.95px;background:#333;border-radius:0.3px;"></div>
<div class="t" style="left:399.20px;top:285.83px;font-size:8.40px;color:#000000;transform:scaleX(0.95);transform-origin:0 0;">None</div>
<div class="db" style="left:487.80px;top:286.25px;width:12.20px;height:10.16px;"></div>
<div style="left:491.80px;top:293.10px;width:0.95px;height:0.95px;background:#333;border-radius:0.3px;"></div>
<div style="left:494.05px;top:293.10px;width:0.95px;height:0.95px;background:#333;border-radius:0.3px;"></div>
<div style="left:496.30px;top:293.10px;width:0.95px;height:0.95px;background:#333;border-radius:0.3px;"></div>
<div class="t" style="left:504.80px;top:285.83px;font-size:8.40px;color:#000000;transform:scaleX(0.95);transform-origin:0 0;">8</div>
<div class="t" style="left:537.60px;top:285.83px;font-size:8.40px;color:#000000;transform:scaleX(0.95);transform-origin:0 0;">Left</div>
<div style="left:566.50px;top:287.33px;width:3.90px;height:1.00px;background:#000000;opacity:0.9;"></div>
<div style="left:566.50px;top:289.43px;width:5.30px;height:1.00px;background:#000000;opacity:0.9;"></div>
<div style="left:566.50px;top:291.53px;width:2.10px;height:1.00px;background:#000000;opacity:0.9;"></div>
<div class="t" style="left:577.30px;top:285.83px;font-size:8.40px;color:#000000;transform:scaleX(0.95);transform-origin:0 0;">Nominal</div>
<div class="rb" style="left:1.90px;top:300.90px;width:24.50px;height:9.56px;"></div>
<div class="t" style="right:585.10px;top:300.16px;font-size:8.40px;color:#000000;transform:scaleX(0.95);transform-origin:100% 0;">22</div>
<div class="t" style="left:30.00px;top:300.16px;font-size:8.40px;color:#000000;transform:scaleX(0.95);transform-origin:0 0;">passfail</div>
<div class="t" style="left:87.40px;top:300.16px;font-size:8.40px;color:#000000;transform:scaleX(0.95);transform-origin:0 0;">String</div>
<div class="db" style="left:123.60px;top:300.60px;width:12.00px;height:10.16px;"></div>
<div style="left:127.60px;top:307.45px;width:0.95px;height:0.95px;background:#333;border-radius:0.3px;"></div>
<div style="left:129.85px;top:307.45px;width:0.95px;height:0.95px;background:#333;border-radius:0.3px;"></div>
<div style="left:132.10px;top:307.45px;width:0.95px;height:0.95px;background:#333;border-radius:0.3px;"></div>
<div class="t" style="left:140.00px;top:300.16px;font-size:8.40px;color:#000000;transform:scaleX(0.95);transform-origin:0 0;">1</div>
<div class="t" style="left:166.20px;top:300.16px;font-size:8.40px;color:#000000;transform:scaleX(0.95);transform-origin:0 0;"></div>
<div class="t" style="left:293.20px;top:300.16px;font-size:8.40px;color:#000000;transform:scaleX(0.95);transform-origin:0 0;">None</div>
<div class="db" style="left:382.80px;top:300.60px;width:11.80px;height:10.16px;"></div>
<div style="left:386.70px;top:307.45px;width:0.95px;height:0.95px;background:#333;border-radius:0.3px;"></div>
<div style="left:388.95px;top:307.45px;width:0.95px;height:0.95px;background:#333;border-radius:0.3px;"></div>
<div style="left:391.20px;top:307.45px;width:0.95px;height:0.95px;background:#333;border-radius:0.3px;"></div>
<div class="t" style="left:399.20px;top:300.16px;font-size:8.40px;color:#000000;transform:scaleX(0.95);transform-origin:0 0;">None</div>
<div class="db" style="left:487.80px;top:300.60px;width:12.20px;height:10.16px;"></div>
<div style="left:491.80px;top:307.45px;width:0.95px;height:0.95px;background:#333;border-radius:0.3px;"></div>
<div style="left:494.05px;top:307.45px;width:0.95px;height:0.95px;background:#333;border-radius:0.3px;"></div>
<div style="left:496.30px;top:307.45px;width:0.95px;height:0.95px;background:#333;border-radius:0.3px;"></div>
<div class="t" style="left:504.80px;top:300.16px;font-size:8.40px;color:#000000;transform:scaleX(0.95);transform-origin:0 0;">1</div>
<div class="t" style="left:537.60px;top:300.16px;font-size:8.40px;color:#000000;transform:scaleX(0.95);transform-origin:0 0;">Left</div>
<div style="left:566.50px;top:301.66px;width:3.90px;height:1.00px;background:#000000;opacity:0.9;"></div>
<div style="left:566.50px;top:303.76px;width:5.30px;height:1.00px;background:#000000;opacity:0.9;"></div>
<div style="left:566.50px;top:305.86px;width:2.10px;height:1.00px;background:#000000;opacity:0.9;"></div>
<div class="t" style="left:577.30px;top:300.16px;font-size:8.40px;color:#000000;transform:scaleX(0.95);transform-origin:0 0;">Nominal</div>
</div>
<div style="left:66.10px;top:57.90px;width:1.00px;height:324.66px;background:#b3b2ae;"></div>
<div style="left:66.10px;top:57.90px;width:609.20px;height:0.80px;background:#c3c2be;"></div>
<div style="left:677.20px;top:58.50px;width:7.90px;height:323.00px;background:#d7d6d3;border:1px solid #bdbcb8;"></div>
<div class="db" style="left:677.20px;top:58.50px;width:7.90px;height:8.10px;"></div>
<svg style="left:677.2px;top:58.5px" width="8" height="8"><path d="M2.2 5.0 L3.95 3.2 L5.7 5.0" stroke="#1a1a1a" stroke-width="1.1" fill="none"/></svg>
<div style="left:677.20px;top:70.10px;width:7.90px;height:290.90px;background:linear-gradient(90deg,#9dbeea,#8db2e4 60%,#86ade2);border:1px solid #6e97d0;border-radius:1px;"></div>
<div style="left:679.70px;top:213.20px;width:2.40px;height:0.90px;background:#557aaf;"></div>
<div style="left:679.70px;top:215.80px;width:2.40px;height:0.90px;background:#557aaf;"></div>
<div class="db" style="left:677.20px;top:375.00px;width:7.90px;height:6.30px;"></div>
<svg style="left:677.2px;top:374.5px" width="8" height="8"><path d="M2.2 3.3 L3.95 5.1 L5.7 3.3" stroke="#1a1a1a" stroke-width="1.1" fill="none"/></svg>
<div style="left:67.40px;top:384.30px;width:607.60px;height:7.60px;background:#d7d6d3;border:1px solid #bdbcb8;"></div>
<div class="db" style="left:67.40px;top:384.30px;width:7.60px;height:7.60px;"></div>
<svg style="left:67.4px;top:384.3px" width="8" height="8"><path d="M4.8 2.2 L3.0 3.8 L4.8 5.4" stroke="#9a9a98" stroke-width="1" fill="none"/></svg>
<div style="left:75.00px;top:384.30px;width:529.00px;height:7.60px;background:linear-gradient(#9dbeea,#8db2e4 60%,#82a9e0);border:1px solid #6e97d0;border-radius:1px;"></div>
<div style="left:338.30px;top:386.60px;width:0.80px;height:3.00px;background:#5a80b6;"></div>
<div style="left:339.90px;top:386.60px;width:0.80px;height:3.00px;background:#5a80b6;"></div>
<div class="db" style="left:667.60px;top:384.30px;width:7.40px;height:7.60px;"></div>
<svg style="left:667.6px;top:384.3px" width="8" height="8"><path d="M3.0 2.2 L4.8 3.8 L3.0 5.4" stroke="#1a1a1a" stroke-width="1.1" fill="none"/></svg>
<div style="left:160.40px;top:393.00px;width:526.20px;height:0.90px;background:#cfcecb;"></div>
<div style="left:67.80px;top:393.20px;width:39.50px;height:13.20px;background:linear-gradient(#e4e3e0,#dad9d6);border:1px solid #c1c0bc;border-top:none;border-right:none;"></div>
<div class="t" style="left:69.00px;top:394.80px;font-size:8.4px;font-weight:400;color:#2c2c2c;transform:scaleX(0.95);transform-origin:0 0;">Data View</div>
<div style="left:107.30px;top:392.60px;width:53.10px;height:15.40px;background:#f7f7f6;border:1px solid #b4b3af;border-top:none;border-radius:0 0 1.5px 1.5px;"></div>
<div style="left:107.80px;top:406.40px;width:52.10px;height:1.60px;background:#7098d0;border-radius:0 0 1.5px 1.5px;"></div>
<div class="t" style="left:111.00px;top:395.10px;font-size:8.4px;font-weight:400;color:#000000;transform:scaleX(0.912);transform-origin:0 0;">Variable View</div>
<div style="left:66.20px;top:408.30px;width:620.40px;height:1.00px;background:#d3d2cf;"></div>
<div style="left:66.00px;top:408.60px;width:334.90px;height:10.40px;border:1px solid #c4c3bf;border-bottom:none;border-left:none;"></div>
<div style="left:404.00px;top:408.60px;width:90.10px;height:10.40px;border:1px solid #c4c3bf;border-bottom:none;"></div>
<div style="left:497.10px;top:408.60px;width:46.40px;height:10.40px;border:1px solid #c4c3bf;border-bottom:none;"></div>
<div class="t" style="left:507.00px;top:408.90px;font-size:8.4px;font-weight:400;color:#1e1e1e;transform:scaleX(0.95);transform-origin:0 0;">Filter off</div>
<div style="left:547.00px;top:408.60px;width:67.80px;height:10.40px;border:1px solid #c4c3bf;border-bottom:none;"></div>
<div class="t" style="left:561.60px;top:408.90px;font-size:8.4px;font-weight:400;color:#1e1e1e;transform:scaleX(0.912);transform-origin:0 0;">Weights off</div>
<div style="left:618.60px;top:408.60px;width:67.40px;height:10.40px;border:1px solid #c4c3bf;border-bottom:none;"></div>
<div class="t" style="left:630.60px;top:408.90px;font-size:8.4px;font-weight:400;color:#1e1e1e;transform:scaleX(0.95);transform-origin:0 0;">Split by year</div>
<div style="left:347.80px;top:123.80px;width:274.80px;height:153.80px;background:#f6f6f5;border:1px solid #3a3a3a;"></div>
<div style="left:349.60px;top:125.60px;width:271.20px;height:150.20px;background:#edeceb;"></div>
<div class="t" style="left:281.40px;width:400px;text-align:center;top:128.50px;font-size:8.4px;font-weight:700;color:#1a1a1a;transform:scaleX(0.95);transform-origin:50% 0;">psppire</div>
<div style="left:609.50px;top:129.20px;width:8.80px;height:8.00px;border:1px solid #555;border-right-color:#2a2a2a;border-bottom-color:#2a2a2a;background:linear-gradient(#ffffff,#efeeec);"></div>
<svg style="left:609.5px;top:129.2px" width="9" height="8"><path d="M2.5 2.0L6.3 5.9M6.3 2.0L2.5 5.9" stroke="#444" stroke-width="0.9"/><circle cx="4.4" cy="3.95" r="0.9" fill="#111"/></svg>
<div style="left:350.60px;top:141.00px;width:268.80px;height:134.20px;border:1px solid #3a3a3a;border-right-color:#4a4a4a;background:#edeceb;"></div>
<div style="left:359.60px;top:148.60px;width:198.00px;height:123.20px;border:1px solid #cfcec9;border-radius:2.5px;"></div>
<div style="left:361.60px;top:144.00px;width:45.00px;height:9.00px;background:#edeceb;"></div>
<div class="t" style="left:362.80px;top:143.60px;font-size:8.4px;font-weight:400;color:#000000;transform:scaleX(0.9215);transform-origin:0 0;">Value Labels</div>
<div class="t" style="left:374.00px;top:162.10px;font-size:8.4px;font-weight:400;color:#000000;transform:scaleX(0.9975);transform-origin:0 0;">Value:</div>
<div style="left:420.10px;top:160.10px;width:46.10px;height:12.70px;background:#fff;border:1px solid #8c8b87;border-radius:1.5px;"></div>
<div class="t" style="left:423.30px;top:161.90px;font-size:8.4px;font-weight:400;color:#000000;transform:scaleX(0.95);transform-origin:0 0;">2</div>
<div class="t" style="left:373.70px;top:177.60px;font-size:8.4px;font-weight:400;color:#000000;transform:scaleX(0.9215);transform-origin:0 0;">Value Label:</div>
<div style="left:420.40px;top:176.40px;width:128.40px;height:12.20px;background:#fff;border:1px solid #8c8b87;border-radius:1.5px;"></div>
<div class="t" style="left:422.80px;top:177.70px;font-size:8.4px;font-weight:400;color:#000000;transform:scaleX(0.855);transform-origin:0 0;">ASIAN</div>
<div style="left:375.10px;top:198.20px;width:50.90px;height:16.60px;border:1px solid #c7c6c2;border-radius:2px;background:linear-gradient(#f3f3f1,#e6e5e2);"></div>
<svg style="left:387.0px;top:201.6px" width="11" height="11"><path d="M4.3 0.2 h2.4 v4.2 h4.2 v2.4 h-4.2 v4.2 h-2.4 v-4.2 h-4.2 v-2.4 h4.2 Z" fill="#bebdb9"/></svg>
<div class="t" style="left:400.40px;top:201.60px;font-size:8.4px;font-weight:400;color:#a8a7a3;transform:scaleX(0.95);transform-origin:0 0;">Add</div>
<div style="left:375.10px;top:222.40px;width:50.90px;height:16.40px;border:1px solid #c7c6c2;border-radius:2px;background:linear-gradient(#f3f3f1,#e6e5e2);"></div>
<svg style="left:382.5px;top:224.5px" width="13" height="12"><path d="M1.5 6.8 L4.2 9.8 L10.5 1.5" stroke="#bdbcb8" stroke-width="1.7" fill="none"/></svg>
<div class="t" style="left:396.60px;top:225.90px;font-size:8.4px;font-weight:400;color:#a5a4a0;transform:scaleX(0.95);transform-origin:0 0;">Apply</div>
<div class="db" style="left:375.10px;top:246.80px;width:50.90px;height:16.40px;"></div>
<div style="left:380.50px;top:253.40px;width:9.10px;height:2.60px;background:linear-gradient(#84a9de,#3f6cb2);border-radius:1px;"></div>
<div class="t" style="left:392.60px;top:250.20px;font-size:8.4px;font-weight:400;color:#000000;transform:scaleX(0.912);transform-origin:0 0;">Remove</div>
<div style="left:429.00px;top:195.10px;width:123.80px;height:71.50px;background:#fff;border:1px solid #9c9b97;"></div>
<div style="left:430.10px;top:207.20px;width:121.90px;height:11.20px;background:linear-gradient(#7ea6dc,#6d96d2);"></div>
<div class="t" style="left:432.30px;top:196.70px;font-size:8.4px;font-weight:400;color:#000000;transform:scaleX(0.95);transform-origin:0 0;">1 =</div>
<div class="t" style="left:448.00px;top:196.70px;font-size:8.4px;font-weight:400;color:#000000;transform:scaleX(0.95);transform-origin:0 0;">`</div>
<div class="t" style="left:450.20px;top:196.70px;font-size:8.4px;font-weight:400;color:#000000;transform:scaleX(0.855);transform-origin:0 0;">AMERICAN INDIAN'</div>
<div class="t" style="left:432.30px;top:208.25px;font-size:8.4px;font-weight:400;color:#ffffff;transform:scaleX(0.95);transform-origin:0 0;">2 =</div>
<div class="t" style="left:448.00px;top:208.25px;font-size:8.4px;font-weight:400;color:#ffffff;transform:scaleX(0.95);transform-origin:0 0;">`</div>
<div class="t" style="left:450.20px;top:208.25px;font-size:8.4px;font-weight:400;color:#ffffff;transform:scaleX(0.855);transform-origin:0 0;">ASIAN'</div>
<div class="t" style="left:432.30px;top:219.80px;font-size:8.4px;font-weight:400;color:#000000;transform:scaleX(0.95);transform-origin:0 0;">3 =</div>
<div class="t" style="left:448.00px;top:219.80px;font-size:8.4px;font-weight:400;color:#000000;transform:scaleX(0.95);transform-origin:0 0;">`</div>
<div class="t" style="left:450.20px;top:219.80px;font-size:8.4px;font-weight:400;color:#000000;transform:scaleX(0.855);transform-origin:0 0;">AFRO-AMERICAN'</div>
<div class="t" style="left:432.30px;top:231.35px;font-size:8.4px;font-weight:400;color:#000000;transform:scaleX(0.95);transform-origin:0 0;">4 =</div>
<div class="t" style="left:448.00px;top:231.35px;font-size:8.4px;font-weight:400;color:#000000;transform:scaleX(0.95);transform-origin:0 0;">`</div>
<div class="t" style="left:450.20px;top:231.35px;font-size:8.4px;font-weight:400;color:#000000;transform:scaleX(0.855);transform-origin:0 0;">CAUCASIAN'</div>
<div class="t" style="left:432.30px;top:242.90px;font-size:8.4px;font-weight:400;color:#000000;transform:scaleX(0.95);transform-origin:0 0;">5 =</div>
<div class="t" style="left:448.00px;top:242.90px;font-size:8.4px;font-weight:400;color:#000000;transform:scaleX(0.95);transform-origin:0 0;">`</div>
<div class="t" style="left:450.20px;top:242.90px;font-size:8.4px;font-weight:400;color:#000000;transform:scaleX(0.855);transform-origin:0 0;">HISPANIC'</div>
<div class="db" style="left:567.10px;top:147.20px;width:46.70px;height:16.60px;"></div>
<div class="db" style="left:567.10px;top:200.00px;width:46.70px;height:16.40px;"></div>
<div class="db" style="left:567.10px;top:252.00px;width:46.70px;height:16.40px;"></div>
<div class="t" style="left:592.00px;top:150.80px;font-size:8.4px;font-weight:400;color:#000000;transform:scaleX(0.76);transform-origin:0 0;">OK</div>
<svg style="left:577px;top:149px" width="14" height="12" viewBox="0 0 14 12">
<defs><linearGradient id="gb" x1="0" y1="0" x2="0" y2="1"><stop offset="0" stop-color="#b5d0f2"/><stop offset="1" stop-color="#5a8cd0"/></linearGradient></defs>
<path d="M1.2 6.8 L5.7 3.0 V5.4 H8.4 V1.4 H11.9 V8.5 H5.7 V10.6 Z" fill="url(#gb)" stroke="#5f8fcf" stroke-width="0.6" stroke-linejoin="round"/>
<rect x="8.9" y="1.8" width="2.4" height="2.0" fill="#e8f0fb"/></svg>
<div class="t" style="left:585.20px;top:203.40px;font-size:8.4px;font-weight:400;color:#000000;transform:scaleX(0.8835);transform-origin:0 0;">Cancel</div>
<svg style="left:573px;top:202.5px" width="10" height="11" viewBox="0 0 10 11"><path d="M1.6 1.6 L8.2 9.4 M8.4 1.3 L1.4 9.6" stroke="#e0363c" stroke-width="2.4" stroke-linecap="round"/></svg>
<div class="t" style="left:589.00px;top:255.20px;font-size:8.4px;font-weight:400;color:#000000;transform:scaleX(0.95);transform-origin:0 0;">Help</div>
<svg style="left:575.6px;top:254.6px" width="11.5" height="11.5" viewBox="0 0 11.5 11.5">
<rect x="0.9" y="0.9" width="9.6" height="9.9" rx="2.6" fill="#fbfbfb" stroke="#b9a27a" stroke-width="0.9"/>
<rect x="2.4" y="2.4" width="6.6" height="6.8" rx="2" fill="none" stroke="#c9d3dc" stroke-width="1.6"/>
<circle cx="3.4" cy="3.6" r="1.15" fill="#ee2a2a"/><circle cx="7.8" cy="3.4" r="1.15" fill="#ee2a2a"/>
<circle cx="3.4" cy="8.2" r="1.15" fill="#ee2a2a"/><circle cx="7.8" cy="8.2" r="1.15" fill="#ee2a2a"/>
<rect x="4.6" y="4.6" width="2.3" height="2.3" fill="#f4f6f8"/>
</svg>
</body></html>
